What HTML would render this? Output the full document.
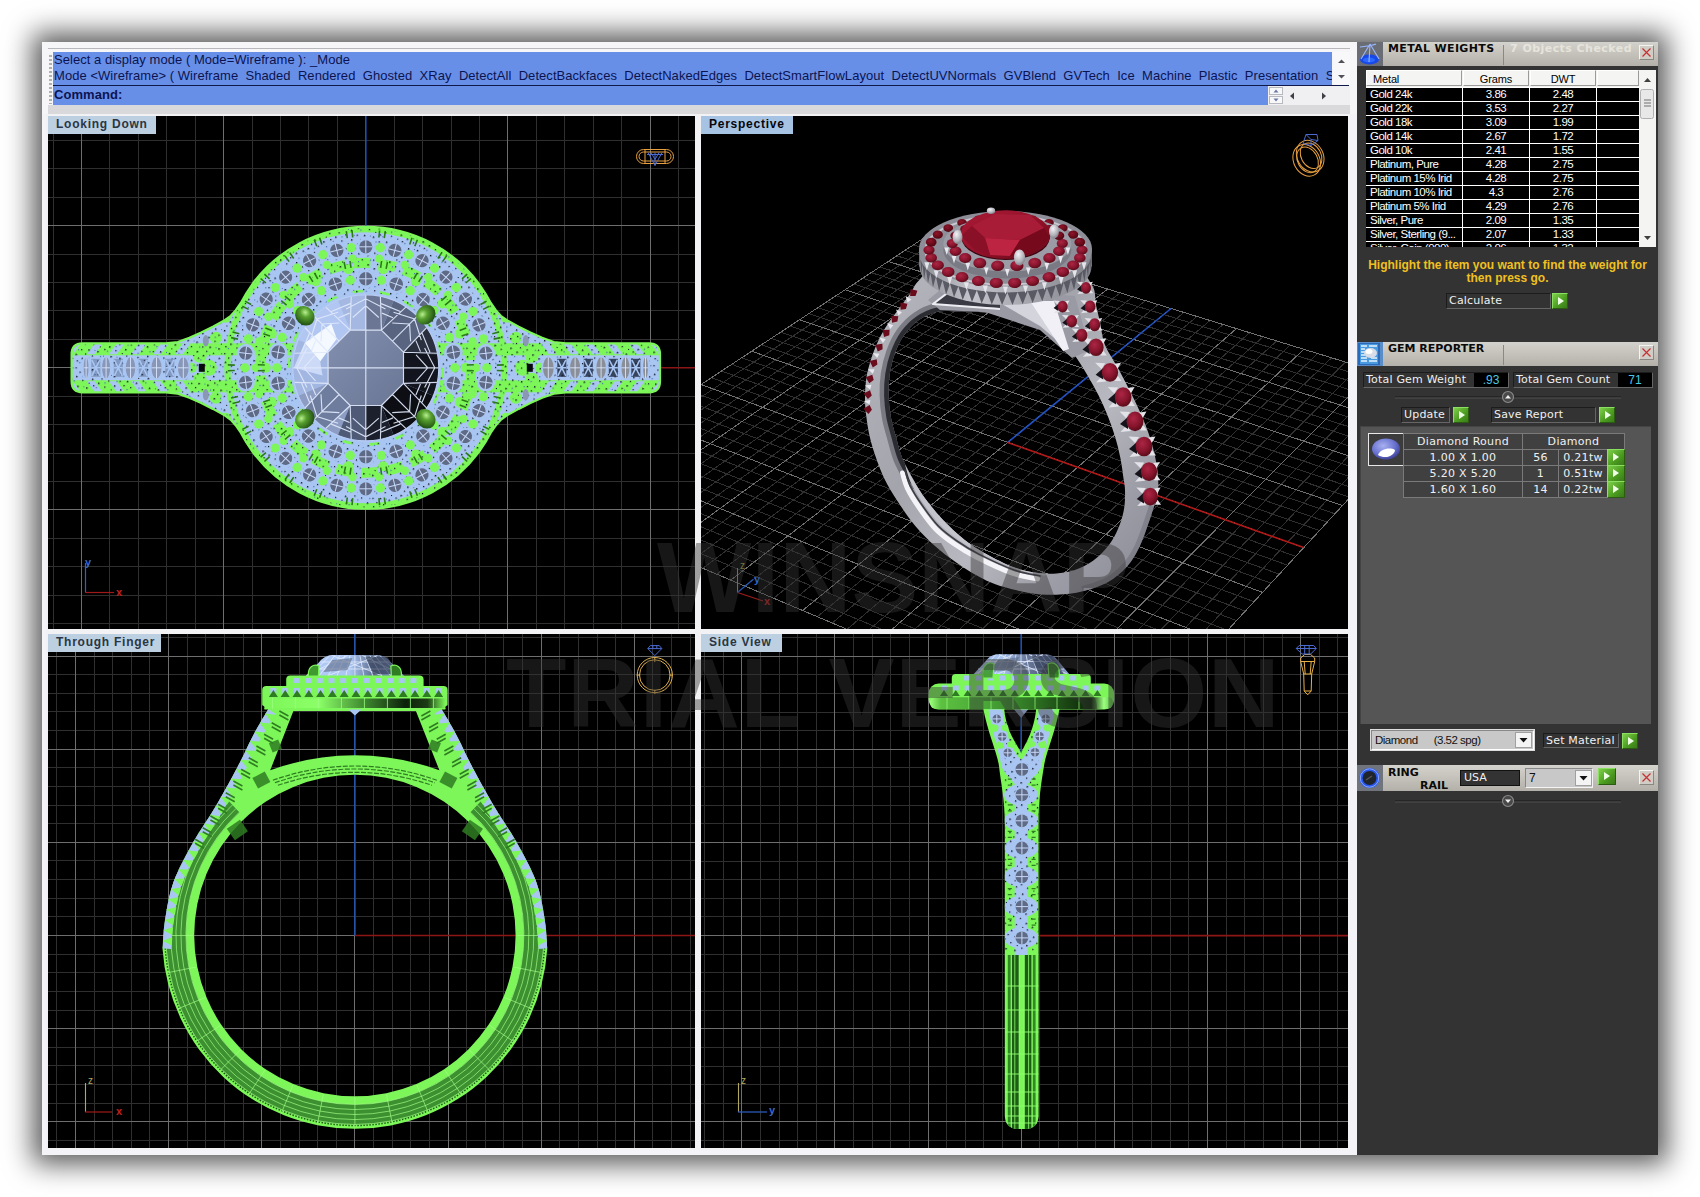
<!DOCTYPE html><html><head><meta charset="utf-8"><title>Rhino - Ring</title><style>

*{box-sizing:border-box;margin:0;padding:0}
html,body{width:1700px;height:1197px;background:#fff;overflow:hidden}
body{position:relative;font-family:"Liberation Sans",sans-serif;font-size:12px;color:#000}
.abs{position:absolute}
#frame{position:absolute;left:42px;top:42px;width:1616px;height:1113px;background:#f4f4f8;box-shadow:0 0 26px 9px rgba(0,0,0,.66)}
#cmdwrap{position:absolute;left:42px;top:42px;width:1315px;height:72px;background:#f6f6f8}
#cmdline{position:absolute;left:48px;top:48px;width:1302px;height:1px;background:#b8b8bc}
#cmdgray{position:absolute;left:48px;top:105px;width:1302px;height:9px;background:#d9d9db}
#cmdblue1{position:absolute;left:53px;top:52px;width:1279px;height:33px;background:#688fe8}
#cmdblue2{position:absolute;left:53px;top:86px;width:1215px;height:19px;background:#688fe8}
#cmddiv{position:absolute;left:53px;top:85px;width:1296px;height:1px;background:#10184a}
.cmdt{position:absolute;left:54px;white-space:nowrap;color:#0c1450;font-size:13px;line-height:16px;letter-spacing:0.05px}
.vp{position:absolute;background:#000;overflow:hidden}
.vpt{position:absolute;left:0;top:0;height:18px;background:#bdd0e2;color:#2a3644;font-weight:bold;font-size:12px;line-height:17px;padding-left:8px;letter-spacing:.75px;white-space:nowrap}
.vp svg{position:absolute;left:0;top:0}
#panel{position:absolute;left:1357px;top:42px;width:301px;height:1113px;background:#333}
.hdr{position:absolute;left:0;width:301px;background:linear-gradient(#d4d2cc,#c2c0b8 55%,#b2b0a8);}
.hdr .ico{position:absolute;left:0;top:0;width:26px;height:100%;background:#6a6d74}
.hdr b{position:absolute;font-family:"DejaVu Sans","Liberation Sans",sans-serif;font-weight:bold;font-size:11px;color:#0a0a0a;white-space:nowrap}
.cls{position:absolute;left:282px;width:15px;height:15px;background:#cfcdc6;border:1px solid #8a8880;border-top-color:#f4f4f0;border-left-color:#f4f4f0}
.cls svg{position:absolute;left:1px;top:1px}
.dv{font-family:"DejaVu Sans","Liberation Sans",sans-serif;font-size:11px;color:#f0f0f0;white-space:nowrap}
.box{position:absolute;background:#333;border:1px solid #1c1c1c;border-right-color:#666;border-bottom-color:#666;}
.box span{position:absolute;left:2px;top:0px;letter-spacing:.2px}
.go{position:absolute;width:16px;height:16px;background:linear-gradient(135deg,#7ed04a,#4a9a20 60%,#3a7a18);border:1px solid #8ae060;border-right-color:#2c5c12;border-bottom-color:#2c5c12}
.go:after{content:"";position:absolute;left:5px;top:3px;border-left:6px solid #f0ffe8;border-top:4px solid transparent;border-bottom:4px solid transparent}
table.mw{position:absolute;left:9px;top:28px;border-collapse:separate;border-spacing:0;font-family:"Liberation Sans",sans-serif;font-size:12px;}


.mwh{background:#f4f4f2;border:1px solid #fff;border-right-color:#9a9a98;border-bottom-color:#9a9a98;font-size:11px;line-height:16px;color:#000;letter-spacing:-.15px}
.mwr{position:absolute;left:0;width:273px;height:13px;}
.mwr i{position:absolute;top:0;height:13px;background:#000;color:#fff;font-style:normal;font-size:11.5px;line-height:13px;text-align:center;white-space:nowrap;overflow:hidden;letter-spacing:-.5px}
.gc{position:absolute;background:#404040;border:1px solid #7a7a7a;text-align:center;letter-spacing:.3px}

</style></head><body>
<div id="frame"></div>
<div id="cmdwrap"></div><div id="cmdline"></div><div id="cmdgray"></div>
<div id="cmdblue1"></div><div id="cmdblue2"></div><div id="cmddiv"></div>
<div class="abs" style="left:49px;top:53px;width:3px;height:51px;background:repeating-linear-gradient(#f4f4f4 0 2px,#b0b0b0 2px 4px)"></div>
<div class="cmdt" style="top:52px">Select a display mode ( Mode=Wireframe ): _Mode</div>
<div class="abs" style="left:53px;top:68px;width:1279px;height:17px;overflow:hidden"><div class="cmdt" style="left:1px;top:0">Mode &lt;Wireframe&gt; ( Wireframe&nbsp; Shaded&nbsp; Rendered&nbsp; Ghosted&nbsp; XRay&nbsp; DetectAll&nbsp; DetectBackfaces&nbsp; DetectNakedEdges&nbsp; DetectSmartFlowLayout&nbsp; DetectUVNormals&nbsp; GVBlend&nbsp; GVTech&nbsp; Ice&nbsp; Machine&nbsp; Plastic&nbsp; Presentation&nbsp; Shaded</div></div>
<div class="cmdt" style="top:87px;font-weight:bold">Command:</div>
<svg class="abs" style="left:1333px;top:52px" width="17" height="54" viewBox="0 0 17 54"><rect x="0" y="0" width="17" height="33" fill="#f8f8fa"/><path d="M5 11L8.5 7.5L12 11Z" fill="#505058"/><path d="M5 23L12 23L8.5 26.5Z" fill="#505058"/></svg>
<svg class="abs" style="left:1268px;top:86px" width="82" height="20" viewBox="0 0 82 20"><rect x="0" y="0" width="82" height="19" fill="#f0f0f2"/><rect x="1.5" y="1.5" width="13" height="7" fill="#f8f8f8" stroke="#b8b8c0"/><rect x="1.5" y="10.5" width="13" height="7" fill="#f8f8f8" stroke="#b8b8c0"/><path d="M5.5 6.5L8 3.5L10.5 6.5Z" fill="#6878a8"/><path d="M5.5 12.5L10.5 12.5L8 15.5Z" fill="#6878a8"/><path d="M26 6.5L26 13.5L22 10Z" fill="#404048"/><path d="M54 6.5L54 13.5L58 10Z" fill="#404048"/></svg>
<div class="abs" style="left:42px;top:114px;width:1315px;height:1041px;background:#f4f4f8"></div>
<div class="abs" style="left:46px;top:114px;width:1304px;height:1036px;background:#f2f2f5"></div>
<div class="vp" style="left:48px;top:116px;width:647px;height:513px"><svg width="647" height="513" viewBox="0 0 647 513"><defs>
<pattern id="stip" width="23" height="19" patternUnits="userSpaceOnUse" patternTransform="rotate(17)"><path d="M1 1h1.4v1.4h-1.4zM8 4h1.2v1.2h-1.2zM15 2h1.4v1.4h-1.4zM20 7h1.2v1.2h-1.2zM4 10h1.4v1.4h-1.4zM11 12h1.4v1.4h-1.4zM18 14h1.2v1.2h-1.2zM7 16h1.3v1.3h-1.3zM13 7h1.2v1.2h-1.2zM2 15h1v1h-1z" fill="#0a1020"/><path d="M5 5h1.2v1.2h-1.2zM17 10h1.2v1.2h-1.2zM10 17h1.2v1.2h-1.2zM21 1h1v1h-1z" fill="#4a70b0"/></pattern>
<linearGradient id="stone" x1="0.12" y1="0.12" x2="0.88" y2="0.88"><stop offset="0" stop-color="#c4d4f6"/><stop offset=".3" stop-color="#9fb0d8"/><stop offset=".55" stop-color="#6c7896"/><stop offset=".75" stop-color="#20242e"/><stop offset="1" stop-color="#0a0c12"/></linearGradient>
<linearGradient id="tbl" x1="0" y1="0" x2="1" y2="1"><stop offset="0" stop-color="#828faf"/><stop offset="1" stop-color="#6a7694"/></linearGradient>
<radialGradient id="prg" cx=".4" cy=".35" r=".7"><stop offset="0" stop-color="#b8f090"/><stop offset=".35" stop-color="#58a030"/><stop offset="1" stop-color="#1c4a10"/></radialGradient>
<clipPath id="bodyclip"><path d="M34.6 227.3L117.8 227.3L129.8 226.0L141.4 221.8L153.2 216.6L164.9 210.7L176.7 204.2L182.8 199.8L187.8 194.2L192.8 187.0L198.0 177.8L205.1 167.1A141 141 0 0 1 430.5 167.1L430.5 167.1L437.6 177.8L442.8 187.0L447.8 194.2L452.8 199.8L458.9 204.2L470.7 210.7L482.4 216.6L494.2 221.8L505.8 226.0L517.8 227.3L601.0 227.3Q612.0 227.3 612.0 238.3L612.0 265.3Q612.0 276.3 601.0 276.3L517.8 276.3L505.8 277.6L494.2 281.8L482.4 287.0L470.7 292.9L458.9 299.4L452.8 303.8L447.8 309.4L442.8 316.6L437.6 325.8L430.5 336.5A141 141 0 0 1 205.1 336.5L205.1 336.5L198.0 325.8L192.8 316.6L187.8 309.4L182.8 303.8L176.7 299.4L164.9 292.9L153.2 287.0L141.4 281.8L129.8 277.6L117.8 276.3L34.6 276.3Q23.6 276.3 23.6 265.3L23.6 238.3Q23.6 227.3 34.6 227.3Z"/></clipPath>
</defs><path d="M-51.5 0V513M-23.5 0V513M5.5 0V513M61.5 0V513M90.5 0V513M118.5 0V513M147.5 0V513M204.5 0V513M232.5 0V513M260.5 0V513M289.5 0V513M346.5 0V513M374.5 0V513M403.5 0V513M431.5 0V513M488.5 0V513M516.5 0V513M545.5 0V513M573.5 0V513M630.5 0V513M658.5 0V513M0 -4.5H647M0 24.5H647M0 52.5H647M0 81.5H647M0 138.5H647M0 166.5H647M0 194.5H647M0 223.5H647M0 280.5H647M0 308.5H647M0 337.5H647M0 365.5H647M0 422.5H647M0 450.5H647M0 479.5H647M0 507.5H647" stroke="#2f2f2f" stroke-width="1" fill="none" shape-rendering="crispEdges"/><path d="M33.5 0V513M175.5 0V513M317.5 0V513M459.5 0V513M602.5 0V513M0 -32.5H647M0 109.5H647M0 251.5H647M0 393.5H647M0 536.5H647" stroke="#6e6e6e" stroke-width="1" fill="none" shape-rendering="crispEdges"/><path d="M317.8 0V110.8" stroke="#1c50b0" stroke-width="1.6"/><path d="M611.8 251.8H647" stroke="#8c1616" stroke-width="1.4"/><path d="M34.6 227.3L117.8 227.3L129.8 226.0L141.4 221.8L153.2 216.6L164.9 210.7L176.7 204.2L182.8 199.8L187.8 194.2L192.8 187.0L198.0 177.8L205.1 167.1A141 141 0 0 1 430.5 167.1L430.5 167.1L437.6 177.8L442.8 187.0L447.8 194.2L452.8 199.8L458.9 204.2L470.7 210.7L482.4 216.6L494.2 221.8L505.8 226.0L517.8 227.3L601.0 227.3Q612.0 227.3 612.0 238.3L612.0 265.3Q612.0 276.3 601.0 276.3L517.8 276.3L505.8 277.6L494.2 281.8L482.4 287.0L470.7 292.9L458.9 299.4L452.8 303.8L447.8 309.4L442.8 316.6L437.6 325.8L430.5 336.5A141 141 0 0 1 205.1 336.5L205.1 336.5L198.0 325.8L192.8 316.6L187.8 309.4L182.8 303.8L176.7 299.4L164.9 292.9L153.2 287.0L141.4 281.8L129.8 277.6L117.8 276.3L34.6 276.3Q23.6 276.3 23.6 265.3L23.6 238.3Q23.6 227.3 34.6 227.3Z" fill="#a9c6f3"/><g clip-path="url(#bodyclip)"><rect x="23.6" y="227.3" width="588.4" height="12" fill="#7cf658"/><rect x="23.6" y="264.3" width="588.4" height="12" fill="#7cf658"/><path d="M142.8 227.3L134.8 227.3L126.8 238.3L134.8 238.3ZM142.8 276.3L134.8 276.3L126.8 265.3L134.8 265.3ZM120.8 227.3L112.8 227.3L104.8 238.3L112.8 238.3ZM120.8 276.3L112.8 276.3L104.8 265.3L112.8 265.3ZM98.8 227.3L90.8 227.3L82.8 238.3L90.8 238.3ZM98.8 276.3L90.8 276.3L82.8 265.3L90.8 265.3ZM76.8 227.3L68.8 227.3L60.8 238.3L68.8 238.3ZM76.8 276.3L68.8 276.3L60.8 265.3L68.8 265.3ZM54.8 227.3L46.8 227.3L38.8 238.3L46.8 238.3ZM54.8 276.3L46.8 276.3L38.8 265.3L46.8 265.3ZM32.8 227.3L24.8 227.3L16.8 238.3L24.8 238.3ZM32.8 276.3L24.8 276.3L16.8 265.3L24.8 265.3ZM492.8 227.3L500.8 227.3L508.8 238.3L500.8 238.3ZM492.8 276.3L500.8 276.3L508.8 265.3L500.8 265.3ZM514.8 227.3L522.8 227.3L530.8 238.3L522.8 238.3ZM514.8 276.3L522.8 276.3L530.8 265.3L522.8 265.3ZM536.8 227.3L544.8 227.3L552.8 238.3L544.8 238.3ZM536.8 276.3L544.8 276.3L552.8 265.3L544.8 265.3ZM558.8 227.3L566.8 227.3L574.8 238.3L566.8 238.3ZM558.8 276.3L566.8 276.3L574.8 265.3L566.8 265.3ZM580.8 227.3L588.8 227.3L596.8 238.3L588.8 238.3ZM580.8 276.3L588.8 276.3L596.8 265.3L588.8 265.3ZM602.8 227.3L610.8 227.3L618.8 238.3L610.8 238.3ZM602.8 276.3L610.8 276.3L618.8 265.3L610.8 265.3Z" fill="#a9c6f3"/><circle cx="317.8" cy="251.8" r="138.5" fill="none" stroke="#7cf658" stroke-width="6"/><circle cx="317.8" cy="251.8" r="105" fill="none" stroke="#7cf658" stroke-width="10" stroke-dasharray="17 8.37"/><circle cx="317.8" cy="251.8" r="76" fill="none" stroke="#7cf658" stroke-width="4" stroke-dasharray="10 16.5"/><circle cx="167.8" cy="221.8" r="6" fill="#7cf658"/><circle cx="167.8" cy="281.8" r="6" fill="#7cf658"/><circle cx="151.8" cy="239.8" r="7" fill="#7cf658"/><circle cx="151.8" cy="263.8" r="7" fill="#7cf658"/><circle cx="160.8" cy="251.8" r="8" fill="#7cf658"/><circle cx="177.8" cy="201.8" r="5" fill="#7cf658"/><circle cx="177.8" cy="301.8" r="5" fill="#7cf658"/><circle cx="143.8" cy="251.8" r="5" fill="#7cf658"/><circle cx="467.8" cy="221.8" r="6" fill="#7cf658"/><circle cx="467.8" cy="281.8" r="6" fill="#7cf658"/><circle cx="483.8" cy="239.8" r="7" fill="#7cf658"/><circle cx="483.8" cy="263.8" r="7" fill="#7cf658"/><circle cx="474.8" cy="251.8" r="8" fill="#7cf658"/><circle cx="457.8" cy="201.8" r="5" fill="#7cf658"/><circle cx="457.8" cy="301.8" r="5" fill="#7cf658"/><circle cx="491.8" cy="251.8" r="5" fill="#7cf658"/><path d="M34.6 227.3L117.8 227.3L129.8 226.0L141.4 221.8L153.2 216.6L164.9 210.7L176.7 204.2L182.8 199.8L187.8 194.2L192.8 187.0L198.0 177.8L205.1 167.1A141 141 0 0 1 430.5 167.1L430.5 167.1L437.6 177.8L442.8 187.0L447.8 194.2L452.8 199.8L458.9 204.2L470.7 210.7L482.4 216.6L494.2 221.8L505.8 226.0L517.8 227.3L601.0 227.3Q612.0 227.3 612.0 238.3L612.0 265.3Q612.0 276.3 601.0 276.3L517.8 276.3L505.8 277.6L494.2 281.8L482.4 287.0L470.7 292.9L458.9 299.4L452.8 303.8L447.8 309.4L442.8 316.6L437.6 325.8L430.5 336.5A141 141 0 0 1 205.1 336.5L205.1 336.5L198.0 325.8L192.8 316.6L187.8 309.4L182.8 303.8L176.7 299.4L164.9 292.9L153.2 287.0L141.4 281.8L129.8 277.6L117.8 276.3L34.6 276.3Q23.6 276.3 23.6 265.3L23.6 238.3Q23.6 227.3 34.6 227.3Z" fill="url(#stip)"/><circle cx="303.2" cy="131.7" r="4.6" fill="#7cf658"/><circle cx="304.5" cy="142.6" r="4.2" fill="#7cf658"/><circle cx="274.9" cy="138.7" r="4.6" fill="#7cf658"/><circle cx="278.8" cy="148.9" r="4.2" fill="#7cf658"/><circle cx="249.1" cy="152.2" r="4.6" fill="#7cf658"/><circle cx="255.3" cy="161.3" r="4.2" fill="#7cf658"/><circle cx="227.2" cy="171.6" r="4.6" fill="#7cf658"/><circle cx="235.5" cy="178.9" r="4.2" fill="#7cf658"/><circle cx="210.7" cy="195.6" r="4.6" fill="#7cf658"/><circle cx="220.4" cy="200.7" r="4.2" fill="#7cf658"/><circle cx="200.3" cy="222.8" r="4.6" fill="#7cf658"/><circle cx="211.0" cy="225.5" r="4.2" fill="#7cf658"/><circle cx="196.8" cy="251.8" r="4.6" fill="#7cf658"/><circle cx="207.8" cy="251.8" r="4.2" fill="#7cf658"/><circle cx="200.3" cy="280.8" r="4.6" fill="#7cf658"/><circle cx="211.0" cy="278.1" r="4.2" fill="#7cf658"/><circle cx="210.7" cy="308.0" r="4.6" fill="#7cf658"/><circle cx="220.4" cy="302.9" r="4.2" fill="#7cf658"/><circle cx="227.2" cy="332.0" r="4.6" fill="#7cf658"/><circle cx="235.5" cy="324.7" r="4.2" fill="#7cf658"/><circle cx="249.1" cy="351.4" r="4.6" fill="#7cf658"/><circle cx="255.3" cy="342.3" r="4.2" fill="#7cf658"/><circle cx="274.9" cy="364.9" r="4.6" fill="#7cf658"/><circle cx="278.8" cy="354.7" r="4.2" fill="#7cf658"/><circle cx="303.2" cy="371.9" r="4.6" fill="#7cf658"/><circle cx="304.5" cy="361.0" r="4.2" fill="#7cf658"/><circle cx="332.4" cy="371.9" r="4.6" fill="#7cf658"/><circle cx="331.1" cy="361.0" r="4.2" fill="#7cf658"/><circle cx="360.7" cy="364.9" r="4.6" fill="#7cf658"/><circle cx="356.8" cy="354.7" r="4.2" fill="#7cf658"/><circle cx="386.5" cy="351.4" r="4.6" fill="#7cf658"/><circle cx="380.3" cy="342.3" r="4.2" fill="#7cf658"/><circle cx="408.4" cy="332.0" r="4.6" fill="#7cf658"/><circle cx="400.1" cy="324.7" r="4.2" fill="#7cf658"/><circle cx="424.9" cy="308.0" r="4.6" fill="#7cf658"/><circle cx="415.2" cy="302.9" r="4.2" fill="#7cf658"/><circle cx="435.3" cy="280.8" r="4.6" fill="#7cf658"/><circle cx="424.6" cy="278.1" r="4.2" fill="#7cf658"/><circle cx="438.8" cy="251.8" r="4.6" fill="#7cf658"/><circle cx="427.8" cy="251.8" r="4.2" fill="#7cf658"/><circle cx="435.3" cy="222.8" r="4.6" fill="#7cf658"/><circle cx="424.6" cy="225.5" r="4.2" fill="#7cf658"/><circle cx="424.9" cy="195.6" r="4.6" fill="#7cf658"/><circle cx="415.2" cy="200.7" r="4.2" fill="#7cf658"/><circle cx="408.4" cy="171.6" r="4.6" fill="#7cf658"/><circle cx="400.1" cy="178.9" r="4.2" fill="#7cf658"/><circle cx="386.5" cy="152.2" r="4.6" fill="#7cf658"/><circle cx="380.3" cy="161.3" r="4.2" fill="#7cf658"/><circle cx="360.7" cy="138.7" r="4.6" fill="#7cf658"/><circle cx="356.8" cy="148.9" r="4.2" fill="#7cf658"/><circle cx="332.4" cy="131.7" r="4.6" fill="#7cf658"/><circle cx="331.1" cy="142.6" r="4.2" fill="#7cf658"/><circle cx="302.3" cy="164.2" r="4.6" fill="#7cf658"/><circle cx="300.4" cy="153.3" r="5" fill="#7cf658"/><circle cx="273.3" cy="174.7" r="4.6" fill="#7cf658"/><circle cx="267.8" cy="165.2" r="5" fill="#7cf658"/><circle cx="249.6" cy="194.6" r="4.6" fill="#7cf658"/><circle cx="241.2" cy="187.5" r="5" fill="#7cf658"/><circle cx="234.2" cy="221.4" r="4.6" fill="#7cf658"/><circle cx="223.8" cy="217.6" r="5" fill="#7cf658"/><circle cx="228.8" cy="251.8" r="4.6" fill="#7cf658"/><circle cx="217.8" cy="251.8" r="5" fill="#7cf658"/><circle cx="234.2" cy="282.2" r="4.6" fill="#7cf658"/><circle cx="223.8" cy="286.0" r="5" fill="#7cf658"/><circle cx="249.6" cy="309.0" r="4.6" fill="#7cf658"/><circle cx="241.2" cy="316.1" r="5" fill="#7cf658"/><circle cx="273.3" cy="328.9" r="4.6" fill="#7cf658"/><circle cx="267.8" cy="338.4" r="5" fill="#7cf658"/><circle cx="302.3" cy="339.4" r="4.6" fill="#7cf658"/><circle cx="300.4" cy="350.3" r="5" fill="#7cf658"/><circle cx="333.3" cy="339.4" r="4.6" fill="#7cf658"/><circle cx="335.2" cy="350.3" r="5" fill="#7cf658"/><circle cx="362.3" cy="328.9" r="4.6" fill="#7cf658"/><circle cx="367.8" cy="338.4" r="5" fill="#7cf658"/><circle cx="386.0" cy="309.0" r="4.6" fill="#7cf658"/><circle cx="394.4" cy="316.1" r="5" fill="#7cf658"/><circle cx="401.4" cy="282.2" r="4.6" fill="#7cf658"/><circle cx="411.8" cy="286.0" r="5" fill="#7cf658"/><circle cx="406.8" cy="251.8" r="4.6" fill="#7cf658"/><circle cx="417.8" cy="251.8" r="5" fill="#7cf658"/><circle cx="401.4" cy="221.4" r="4.6" fill="#7cf658"/><circle cx="411.8" cy="217.6" r="5" fill="#7cf658"/><circle cx="386.0" cy="194.6" r="4.6" fill="#7cf658"/><circle cx="394.4" cy="187.5" r="5" fill="#7cf658"/><circle cx="362.3" cy="174.7" r="4.6" fill="#7cf658"/><circle cx="367.8" cy="165.2" r="5" fill="#7cf658"/><circle cx="333.3" cy="164.2" r="4.6" fill="#7cf658"/><circle cx="335.2" cy="153.3" r="5" fill="#7cf658"/><path d="M304.7 121.5L304.0 114.5M299.3 122.1L298.3 115.2M273.9 128.4L271.6 121.8M268.8 130.3L266.2 123.8M245.7 142.5L241.8 136.6M241.1 145.6L237.0 139.9M221.6 162.9L216.4 158.1M217.9 167.0L212.6 162.5M203.1 188.5L197.0 185.1M200.6 193.4L194.3 190.2M191.3 217.8L184.5 216.0M190.0 223.1L183.1 221.6M186.8 249.1L179.8 248.9M186.8 254.5L179.8 254.7M190.0 280.5L183.1 282.0M191.3 285.8L184.5 287.6M200.6 310.2L194.3 313.4M203.1 315.1L197.0 318.5M217.9 336.6L212.6 341.1M221.6 340.7L216.4 345.5M241.1 358.0L237.0 363.7M245.7 361.1L241.8 367.0M268.8 373.3L266.2 379.8M273.9 375.2L271.6 381.8M299.3 381.5L298.3 388.4M304.7 382.1L304.0 389.1M330.9 382.1L331.6 389.1M336.3 381.5L337.3 388.4M361.7 375.2L364.0 381.8M366.8 373.3L369.4 379.8M389.9 361.1L393.8 367.0M394.5 358.0L398.6 363.7M414.0 340.7L419.2 345.5M417.7 336.6L423.0 341.1M432.5 315.1L438.6 318.5M435.0 310.2L441.3 313.4M444.3 285.8L451.1 287.6M445.6 280.5L452.5 282.0M448.8 254.5L455.8 254.7M448.8 249.1L455.8 248.9M445.6 223.1L452.5 221.6M444.3 217.8L451.1 216.0M435.0 193.4L441.3 190.2M432.5 188.5L438.6 185.1M417.7 167.0L423.0 162.5M414.0 162.9L419.2 158.1M394.5 145.6L398.6 139.9M389.9 142.5L393.8 136.6M366.8 130.3L369.4 123.8M361.7 128.4L364.0 121.8M336.3 122.1L337.3 115.2M330.9 121.5L331.6 114.5M303.0 151.9L302.0 145.0M297.5 152.9L296.1 146.0M269.8 163.0L266.4 156.8M264.9 165.8L261.2 159.8M242.3 184.7L237.0 180.1M238.6 189.1L233.2 184.7M223.9 214.6L217.4 212.0M222.0 219.9L215.3 217.7M216.8 249.0L209.8 248.8M216.8 254.6L209.8 254.8M222.0 283.7L215.3 285.9M223.9 289.0L217.4 291.6M238.6 314.5L233.2 318.9M242.3 318.9L237.0 323.5M264.9 337.8L261.2 343.8M269.8 340.6L266.4 346.8M297.5 350.7L296.1 357.6M303.0 351.7L302.0 358.6M332.6 351.7L333.6 358.6M338.1 350.7L339.5 357.6M365.8 340.6L369.2 346.8M370.7 337.8L374.4 343.8M393.3 318.9L398.6 323.5M397.0 314.5L402.4 318.9M411.7 289.0L418.2 291.6M413.6 283.7L420.3 285.9M418.8 254.6L425.8 254.8M418.8 249.0L425.8 248.8M413.6 219.9L420.3 217.7M411.7 214.6L418.2 212.0M397.0 189.1L402.4 184.7M393.3 184.7L398.6 180.1M370.7 165.8L374.4 159.8M365.8 163.0L369.2 156.8M338.1 152.9L339.5 146.0M332.6 151.9L333.6 145.0" stroke="#2a7a18" stroke-width="1.6" fill="none"/><g transform="translate(317.8 130.8) rotate(0)"><circle r="9.2" fill="#a9c6f3"/><circle r="6.6" fill="#5f6b86"/><path d="M-6.6 0H6.6M0 -6.6V6.6" stroke="#c8d8f8" stroke-width="1"/></g><g transform="translate(288.8 134.3) rotate(-14)"><circle r="9.2" fill="#a9c6f3"/><circle r="6.6" fill="#5f6b86"/><path d="M-6.6 0H6.6M0 -6.6V6.6" stroke="#c8d8f8" stroke-width="1"/></g><g transform="translate(261.6 144.7) rotate(-28)"><circle r="9.2" fill="#a9c6f3"/><circle r="6.6" fill="#5f6b86"/><path d="M-6.6 0H6.6M0 -6.6V6.6" stroke="#c8d8f8" stroke-width="1"/></g><g transform="translate(237.6 161.2) rotate(-42)"><circle r="9.2" fill="#a9c6f3"/><circle r="6.6" fill="#5f6b86"/><path d="M-6.6 0H6.6M0 -6.6V6.6" stroke="#c8d8f8" stroke-width="1"/></g><g transform="translate(218.2 183.1) rotate(-55)"><circle r="9.2" fill="#a9c6f3"/><circle r="6.6" fill="#5f6b86"/><path d="M-6.6 0H6.6M0 -6.6V6.6" stroke="#c8d8f8" stroke-width="1"/></g><g transform="translate(204.7 208.9) rotate(-69)"><circle r="9.2" fill="#a9c6f3"/><circle r="6.6" fill="#5f6b86"/><path d="M-6.6 0H6.6M0 -6.6V6.6" stroke="#c8d8f8" stroke-width="1"/></g><g transform="translate(197.7 237.2) rotate(-83)"><circle r="9.2" fill="#a9c6f3"/><circle r="6.6" fill="#5f6b86"/><path d="M-6.6 0H6.6M0 -6.6V6.6" stroke="#c8d8f8" stroke-width="1"/></g><g transform="translate(197.7 266.4) rotate(-97)"><circle r="9.2" fill="#a9c6f3"/><circle r="6.6" fill="#5f6b86"/><path d="M-6.6 0H6.6M0 -6.6V6.6" stroke="#c8d8f8" stroke-width="1"/></g><g transform="translate(204.7 294.7) rotate(-111)"><circle r="9.2" fill="#a9c6f3"/><circle r="6.6" fill="#5f6b86"/><path d="M-6.6 0H6.6M0 -6.6V6.6" stroke="#c8d8f8" stroke-width="1"/></g><g transform="translate(218.2 320.5) rotate(-125)"><circle r="9.2" fill="#a9c6f3"/><circle r="6.6" fill="#5f6b86"/><path d="M-6.6 0H6.6M0 -6.6V6.6" stroke="#c8d8f8" stroke-width="1"/></g><g transform="translate(237.6 342.4) rotate(-138)"><circle r="9.2" fill="#a9c6f3"/><circle r="6.6" fill="#5f6b86"/><path d="M-6.6 0H6.6M0 -6.6V6.6" stroke="#c8d8f8" stroke-width="1"/></g><g transform="translate(261.6 358.9) rotate(-152)"><circle r="9.2" fill="#a9c6f3"/><circle r="6.6" fill="#5f6b86"/><path d="M-6.6 0H6.6M0 -6.6V6.6" stroke="#c8d8f8" stroke-width="1"/></g><g transform="translate(288.8 369.3) rotate(-166)"><circle r="9.2" fill="#a9c6f3"/><circle r="6.6" fill="#5f6b86"/><path d="M-6.6 0H6.6M0 -6.6V6.6" stroke="#c8d8f8" stroke-width="1"/></g><g transform="translate(317.8 372.8) rotate(-180)"><circle r="9.2" fill="#a9c6f3"/><circle r="6.6" fill="#5f6b86"/><path d="M-6.6 0H6.6M0 -6.6V6.6" stroke="#c8d8f8" stroke-width="1"/></g><g transform="translate(346.8 369.3) rotate(-194)"><circle r="9.2" fill="#a9c6f3"/><circle r="6.6" fill="#5f6b86"/><path d="M-6.6 0H6.6M0 -6.6V6.6" stroke="#c8d8f8" stroke-width="1"/></g><g transform="translate(374.0 358.9) rotate(-208)"><circle r="9.2" fill="#a9c6f3"/><circle r="6.6" fill="#5f6b86"/><path d="M-6.6 0H6.6M0 -6.6V6.6" stroke="#c8d8f8" stroke-width="1"/></g><g transform="translate(398.0 342.4) rotate(-222)"><circle r="9.2" fill="#a9c6f3"/><circle r="6.6" fill="#5f6b86"/><path d="M-6.6 0H6.6M0 -6.6V6.6" stroke="#c8d8f8" stroke-width="1"/></g><g transform="translate(417.4 320.5) rotate(-235)"><circle r="9.2" fill="#a9c6f3"/><circle r="6.6" fill="#5f6b86"/><path d="M-6.6 0H6.6M0 -6.6V6.6" stroke="#c8d8f8" stroke-width="1"/></g><g transform="translate(430.9 294.7) rotate(-249)"><circle r="9.2" fill="#a9c6f3"/><circle r="6.6" fill="#5f6b86"/><path d="M-6.6 0H6.6M0 -6.6V6.6" stroke="#c8d8f8" stroke-width="1"/></g><g transform="translate(437.9 266.4) rotate(-263)"><circle r="9.2" fill="#a9c6f3"/><circle r="6.6" fill="#5f6b86"/><path d="M-6.6 0H6.6M0 -6.6V6.6" stroke="#c8d8f8" stroke-width="1"/></g><g transform="translate(437.9 237.2) rotate(-277)"><circle r="9.2" fill="#a9c6f3"/><circle r="6.6" fill="#5f6b86"/><path d="M-6.6 0H6.6M0 -6.6V6.6" stroke="#c8d8f8" stroke-width="1"/></g><g transform="translate(430.9 208.9) rotate(-291)"><circle r="9.2" fill="#a9c6f3"/><circle r="6.6" fill="#5f6b86"/><path d="M-6.6 0H6.6M0 -6.6V6.6" stroke="#c8d8f8" stroke-width="1"/></g><g transform="translate(417.4 183.1) rotate(-305)"><circle r="9.2" fill="#a9c6f3"/><circle r="6.6" fill="#5f6b86"/><path d="M-6.6 0H6.6M0 -6.6V6.6" stroke="#c8d8f8" stroke-width="1"/></g><g transform="translate(398.0 161.2) rotate(-318)"><circle r="9.2" fill="#a9c6f3"/><circle r="6.6" fill="#5f6b86"/><path d="M-6.6 0H6.6M0 -6.6V6.6" stroke="#c8d8f8" stroke-width="1"/></g><g transform="translate(374.0 144.7) rotate(-332)"><circle r="9.2" fill="#a9c6f3"/><circle r="6.6" fill="#5f6b86"/><path d="M-6.6 0H6.6M0 -6.6V6.6" stroke="#c8d8f8" stroke-width="1"/></g><g transform="translate(346.8 134.3) rotate(-346)"><circle r="9.2" fill="#a9c6f3"/><circle r="6.6" fill="#5f6b86"/><path d="M-6.6 0H6.6M0 -6.6V6.6" stroke="#c8d8f8" stroke-width="1"/></g><g transform="translate(317.8 162.8) rotate(0)"><circle r="9.4" fill="#a9c6f3"/><circle r="6.8" fill="#5f6b86"/><path d="M-6.8 0H6.8M0 -6.8V6.8" stroke="#c8d8f8" stroke-width="1"/></g><g transform="translate(287.4 168.2) rotate(-20)"><circle r="9.4" fill="#a9c6f3"/><circle r="6.8" fill="#5f6b86"/><path d="M-6.8 0H6.8M0 -6.8V6.8" stroke="#c8d8f8" stroke-width="1"/></g><g transform="translate(260.6 183.6) rotate(-40)"><circle r="9.4" fill="#a9c6f3"/><circle r="6.8" fill="#5f6b86"/><path d="M-6.8 0H6.8M0 -6.8V6.8" stroke="#c8d8f8" stroke-width="1"/></g><g transform="translate(240.7 207.3) rotate(-60)"><circle r="9.4" fill="#a9c6f3"/><circle r="6.8" fill="#5f6b86"/><path d="M-6.8 0H6.8M0 -6.8V6.8" stroke="#c8d8f8" stroke-width="1"/></g><g transform="translate(230.2 236.3) rotate(-80)"><circle r="9.4" fill="#a9c6f3"/><circle r="6.8" fill="#5f6b86"/><path d="M-6.8 0H6.8M0 -6.8V6.8" stroke="#c8d8f8" stroke-width="1"/></g><g transform="translate(230.2 267.3) rotate(-100)"><circle r="9.4" fill="#a9c6f3"/><circle r="6.8" fill="#5f6b86"/><path d="M-6.8 0H6.8M0 -6.8V6.8" stroke="#c8d8f8" stroke-width="1"/></g><g transform="translate(240.7 296.3) rotate(-120)"><circle r="9.4" fill="#a9c6f3"/><circle r="6.8" fill="#5f6b86"/><path d="M-6.8 0H6.8M0 -6.8V6.8" stroke="#c8d8f8" stroke-width="1"/></g><g transform="translate(260.6 320.0) rotate(-140)"><circle r="9.4" fill="#a9c6f3"/><circle r="6.8" fill="#5f6b86"/><path d="M-6.8 0H6.8M0 -6.8V6.8" stroke="#c8d8f8" stroke-width="1"/></g><g transform="translate(287.4 335.4) rotate(-160)"><circle r="9.4" fill="#a9c6f3"/><circle r="6.8" fill="#5f6b86"/><path d="M-6.8 0H6.8M0 -6.8V6.8" stroke="#c8d8f8" stroke-width="1"/></g><g transform="translate(317.8 340.8) rotate(-180)"><circle r="9.4" fill="#a9c6f3"/><circle r="6.8" fill="#5f6b86"/><path d="M-6.8 0H6.8M0 -6.8V6.8" stroke="#c8d8f8" stroke-width="1"/></g><g transform="translate(348.2 335.4) rotate(-200)"><circle r="9.4" fill="#a9c6f3"/><circle r="6.8" fill="#5f6b86"/><path d="M-6.8 0H6.8M0 -6.8V6.8" stroke="#c8d8f8" stroke-width="1"/></g><g transform="translate(375.0 320.0) rotate(-220)"><circle r="9.4" fill="#a9c6f3"/><circle r="6.8" fill="#5f6b86"/><path d="M-6.8 0H6.8M0 -6.8V6.8" stroke="#c8d8f8" stroke-width="1"/></g><g transform="translate(394.9 296.3) rotate(-240)"><circle r="9.4" fill="#a9c6f3"/><circle r="6.8" fill="#5f6b86"/><path d="M-6.8 0H6.8M0 -6.8V6.8" stroke="#c8d8f8" stroke-width="1"/></g><g transform="translate(405.4 267.3) rotate(-260)"><circle r="9.4" fill="#a9c6f3"/><circle r="6.8" fill="#5f6b86"/><path d="M-6.8 0H6.8M0 -6.8V6.8" stroke="#c8d8f8" stroke-width="1"/></g><g transform="translate(405.4 236.3) rotate(-280)"><circle r="9.4" fill="#a9c6f3"/><circle r="6.8" fill="#5f6b86"/><path d="M-6.8 0H6.8M0 -6.8V6.8" stroke="#c8d8f8" stroke-width="1"/></g><g transform="translate(394.9 207.3) rotate(-300)"><circle r="9.4" fill="#a9c6f3"/><circle r="6.8" fill="#5f6b86"/><path d="M-6.8 0H6.8M0 -6.8V6.8" stroke="#c8d8f8" stroke-width="1"/></g><g transform="translate(375.0 183.6) rotate(-320)"><circle r="9.4" fill="#a9c6f3"/><circle r="6.8" fill="#5f6b86"/><path d="M-6.8 0H6.8M0 -6.8V6.8" stroke="#c8d8f8" stroke-width="1"/></g><g transform="translate(348.2 168.2) rotate(-340)"><circle r="9.4" fill="#a9c6f3"/><circle r="6.8" fill="#5f6b86"/><path d="M-6.8 0H6.8M0 -6.8V6.8" stroke="#c8d8f8" stroke-width="1"/></g><ellipse cx="157.8" cy="224.8" rx="3.0" ry="5.7" fill="#8a98b4"/><ellipse cx="157.8" cy="278.8" rx="3.0" ry="5.7" fill="#8a98b4"/><ellipse cx="477.8" cy="224.8" rx="3.0" ry="5.7" fill="#8a98b4"/><ellipse cx="477.8" cy="278.8" rx="3.0" ry="5.7" fill="#8a98b4"/><ellipse cx="135.3" cy="251.8" rx="7.5" ry="12.5" fill="#a9c6f3"/><ellipse cx="135.3" cy="251.8" rx="5.3" ry="10.5" fill="#8896b8"/><path d="M135.3 241.3V262.3M130.0 251.8H140.6" stroke="#d8e4fc" stroke-width=".9"/><ellipse cx="108.5" cy="251.8" rx="7.2" ry="12.5" fill="#a9c6f3"/><ellipse cx="108.5" cy="251.8" rx="5.0" ry="10.5" fill="#8896b8"/><path d="M108.5 241.3V262.3M103.5 251.8H113.5" stroke="#d8e4fc" stroke-width=".9"/><ellipse cx="82.5" cy="251.8" rx="6.9" ry="12.5" fill="#a9c6f3"/><ellipse cx="82.5" cy="251.8" rx="4.7" ry="10.5" fill="#8896b8"/><path d="M82.5 241.3V262.3M77.8 251.8H87.2" stroke="#d8e4fc" stroke-width=".9"/><ellipse cx="58.1" cy="251.8" rx="6.2" ry="12.5" fill="#a9c6f3"/><ellipse cx="58.1" cy="251.8" rx="4.0" ry="10.5" fill="#8896b8"/><path d="M58.1 241.3V262.3M54.1 251.8H62.1" stroke="#d8e4fc" stroke-width=".9"/><ellipse cx="38.1" cy="251.8" rx="4.6" ry="12.5" fill="#a9c6f3"/><ellipse cx="38.1" cy="251.8" rx="2.4" ry="10.5" fill="#8896b8"/><path d="M38.1 241.3V262.3M35.7 251.8H40.5" stroke="#d8e4fc" stroke-width=".9"/><rect x="117.3" y="242.8" width="9" height="18" fill="#10182c" opacity="0.25"/><path d="M117.3 251.8H126.3M117.8 243.8L125.8 259.8M125.8 243.8L117.8 259.8" stroke="#a9c6f3" stroke-width="1.5"/><rect x="90.8" y="242.8" width="9" height="18" fill="#10182c" opacity="0.25"/><path d="M90.8 251.8H99.8M91.3 243.8L99.3 259.8M99.3 243.8L91.3 259.8" stroke="#a9c6f3" stroke-width="1.5"/><rect x="65.8" y="242.8" width="9" height="18" fill="#10182c" opacity="0.25"/><path d="M65.8 251.8H74.8M66.3 243.8L74.3 259.8M74.3 243.8L66.3 259.8" stroke="#a9c6f3" stroke-width="1.5"/><rect x="43.3" y="242.8" width="9" height="18" fill="#10182c" opacity="0.25"/><path d="M43.3 251.8H52.3M43.8 243.8L51.8 259.8M51.8 243.8L43.8 259.8" stroke="#a9c6f3" stroke-width="1.5"/><ellipse cx="500.3" cy="251.8" rx="7.5" ry="12.5" fill="#a9c6f3"/><ellipse cx="500.3" cy="251.8" rx="5.3" ry="10.5" fill="#8a8e98"/><path d="M500.3 241.3V262.3M495.0 251.8H505.6" stroke="#d8e4fc" stroke-width=".9"/><ellipse cx="527.1" cy="251.8" rx="7.2" ry="12.5" fill="#a9c6f3"/><ellipse cx="527.1" cy="251.8" rx="5.0" ry="10.5" fill="#8a8e98"/><path d="M527.1 241.3V262.3M522.1 251.8H532.1" stroke="#d8e4fc" stroke-width=".9"/><ellipse cx="553.1" cy="251.8" rx="6.9" ry="12.5" fill="#a9c6f3"/><ellipse cx="553.1" cy="251.8" rx="4.7" ry="10.5" fill="#8a8e98"/><path d="M553.1 241.3V262.3M548.4 251.8H557.8" stroke="#d8e4fc" stroke-width=".9"/><ellipse cx="577.5" cy="251.8" rx="6.2" ry="12.5" fill="#a9c6f3"/><ellipse cx="577.5" cy="251.8" rx="4.0" ry="10.5" fill="#8a8e98"/><path d="M577.5 241.3V262.3M573.5 251.8H581.5" stroke="#d8e4fc" stroke-width=".9"/><ellipse cx="597.5" cy="251.8" rx="4.6" ry="12.5" fill="#a9c6f3"/><ellipse cx="597.5" cy="251.8" rx="2.4" ry="10.5" fill="#8a8e98"/><path d="M597.5 241.3V262.3M595.1 251.8H599.9" stroke="#d8e4fc" stroke-width=".9"/><rect x="509.3" y="242.8" width="9" height="18" fill="#10182c" opacity="0.75"/><path d="M509.3 251.8H518.3M509.8 243.8L517.8 259.8M517.8 243.8L509.8 259.8" stroke="#a9c6f3" stroke-width="1.5"/><rect x="535.8" y="242.8" width="9" height="18" fill="#10182c" opacity="0.75"/><path d="M535.8 251.8H544.8M536.3 243.8L544.3 259.8M544.3 243.8L536.3 259.8" stroke="#a9c6f3" stroke-width="1.5"/><rect x="560.8" y="242.8" width="9" height="18" fill="#10182c" opacity="0.75"/><path d="M560.8 251.8H569.8M561.3 243.8L569.3 259.8M569.3 243.8L561.3 259.8" stroke="#a9c6f3" stroke-width="1.5"/><rect x="583.3" y="242.8" width="9" height="18" fill="#10182c" opacity="0.75"/><path d="M583.3 251.8H592.3M583.8 243.8L591.8 259.8M591.8 243.8L583.8 259.8" stroke="#a9c6f3" stroke-width="1.5"/><rect x="150.8" y="247.8" width="6" height="8" fill="#05080c"/><rect x="478.8" y="247.8" width="6" height="8" fill="#05080c"/></g><path d="M34.6 227.3L117.8 227.3L129.8 226.0L141.4 221.8L153.2 216.6L164.9 210.7L176.7 204.2L182.8 199.8L187.8 194.2L192.8 187.0L198.0 177.8L205.1 167.1A141 141 0 0 1 430.5 167.1L430.5 167.1L437.6 177.8L442.8 187.0L447.8 194.2L452.8 199.8L458.9 204.2L470.7 210.7L482.4 216.6L494.2 221.8L505.8 226.0L517.8 227.3L601.0 227.3Q612.0 227.3 612.0 238.3L612.0 265.3Q612.0 276.3 601.0 276.3L517.8 276.3L505.8 277.6L494.2 281.8L482.4 287.0L470.7 292.9L458.9 299.4L452.8 303.8L447.8 309.4L442.8 316.6L437.6 325.8L430.5 336.5A141 141 0 0 1 205.1 336.5L205.1 336.5L198.0 325.8L192.8 316.6L187.8 309.4L182.8 303.8L176.7 299.4L164.9 292.9L153.2 287.0L141.4 281.8L129.8 277.6L117.8 276.3L34.6 276.3Q23.6 276.3 23.6 265.3L23.6 238.3Q23.6 227.3 34.6 227.3Z" fill="none" stroke="#7cf658" stroke-width="2.2"/><circle cx="317.8" cy="251.8" r="75.5" fill="#a9c6f3"/><path d="M317.8 251.8L345.7 184.4A73 73 0 0 0 317.8 178.8Z" fill="#6a7694"/><path d="M317.8 251.8L317.8 178.8A73 73 0 0 0 289.9 184.4Z" fill="#a4b8e2"/><path d="M317.8 251.8L289.9 184.4A73 73 0 0 0 250.4 223.9Z" fill="#b2c6f2"/><path d="M317.8 251.8L250.4 223.9A73 73 0 0 0 250.4 279.7Z" fill="#a2b6e2"/><path d="M317.8 251.8L250.4 279.7A73 73 0 0 0 289.9 319.2Z" fill="#8c9cc2"/><path d="M317.8 251.8L289.9 319.2A73 73 0 0 0 317.8 324.8Z" fill="#4e5a76"/><path d="M317.8 251.8L317.8 324.8A73 73 0 0 0 345.7 319.2Z" fill="#1c202c"/><path d="M317.8 251.8L345.7 319.2A73 73 0 0 0 385.2 279.7Z" fill="#0c0e14"/><path d="M317.8 251.8L385.2 279.7A73 73 0 0 0 385.2 223.9Z" fill="#12151d"/><path d="M317.8 251.8L385.2 223.9A73 73 0 0 0 345.7 184.4Z" fill="#586480"/><path d="M256.6 227.1L283.3 207.7L288.8 222.8L272.2 245.4Z" fill="#f4f8ff"/><path d="M245.8 251.8L256.6 227.1L272.2 245.4L274.5 259.4Z" fill="#ccdaf8"/><path d="M279.9 267.5L257.3 292.6A73 73 0 0 0 277.0 312.3L302.1 289.7Z" fill="#6e7c9e"/><path d="M355.7 236.1L378.3 211.0A73 73 0 0 1 389.7 239.1Z" fill="#2a303e"/><polygon points="355.5 236.2 333.4 214.1 302.2 214.1 280.1 236.2 280.1 267.4 302.2 289.5 333.4 289.5 355.5 267.4" fill="url(#tbl)"/><path d="M355.5 236.2L389.3 237.2M355.5 236.2L378.7 211.5M355.5 236.2L333.4 214.1M344.5 225.1L369.4 200.2M362.6 225.4L361.6 208.0L344.2 207.0M373.3 224.1L366.6 203.0L345.5 196.3M372.5 235.6L367.9 224.6M382.0 236.4L374.1 217.3M333.4 214.1L358.1 190.9M333.4 214.1L332.4 180.3M333.4 214.1L302.2 214.1M317.8 214.1L317.8 178.8M330.8 201.5L317.8 189.8L304.8 201.5M337.5 193.0L317.8 182.8L298.1 193.0M345.0 201.7L334.0 197.1M352.3 195.5L333.2 187.6M302.2 214.1L303.2 180.3M302.2 214.1L277.5 190.9M302.2 214.1L280.1 236.2M291.1 225.1L266.2 200.2M291.4 207.0L274.0 208.0L273.0 225.4M290.1 196.3L269.0 203.0L262.3 224.1M301.6 197.1L290.6 201.7M302.4 187.6L283.3 195.5M280.1 236.2L256.9 211.5M280.1 236.2L246.3 237.2M280.1 236.2L280.1 267.4M280.1 251.8L244.8 251.8M267.5 238.8L255.8 251.8L267.5 264.8M259.0 232.1L248.8 251.8L259.0 271.5M267.7 224.6L263.1 235.6M261.5 217.3L253.6 236.4M280.1 267.4L246.3 266.4M280.1 267.4L256.9 292.1M280.1 267.4L302.2 289.5M291.1 278.5L266.2 303.4M273.0 278.2L274.0 295.6L291.4 296.6M262.3 279.5L269.0 300.6L290.1 307.3M263.1 268.0L267.7 279.0M253.6 267.2L261.5 286.3M302.2 289.5L277.5 312.7M302.2 289.5L303.2 323.3M302.2 289.5L333.4 289.5M317.8 289.5L317.8 324.8M304.8 302.1L317.8 313.8L330.8 302.1M298.1 310.6L317.8 320.8L337.5 310.6M290.6 301.9L301.6 306.5M283.3 308.1L302.4 316.0M333.4 289.5L332.4 323.3M333.4 289.5L358.1 312.7M333.4 289.5L355.5 267.4M344.5 278.5L369.4 303.4M344.2 296.6L361.6 295.6L362.6 278.2M345.5 307.3L366.6 300.6L373.3 279.5M334.0 306.5L345.0 301.9M333.2 316.0L352.3 308.1M355.5 267.4L378.7 292.1M355.5 267.4L389.3 266.4M355.5 267.4L355.5 236.2M355.5 251.8L390.8 251.8M368.1 264.8L379.8 251.8L368.1 238.8M376.6 271.5L386.8 251.8L376.6 232.1M367.9 279.0L372.5 268.0M374.1 286.3L382.0 267.2M280.1 251.8H355.5M317.8 214.1V289.5" stroke="#dfe8fb" stroke-width="1.15" fill="none" opacity=".92"/><circle cx="317.8" cy="251.8" r="73" fill="none" stroke="#b8ccf4" stroke-width="1.2"/><ellipse cx="256.8" cy="199.8" rx="10.5" ry="9" transform="rotate(45 256.8 199.8)" fill="url(#prg)"/><ellipse cx="377.8" cy="198.8" rx="10.5" ry="9" transform="rotate(-45 377.8 198.8)" fill="url(#prg)"/><ellipse cx="256.8" cy="302.8" rx="10.5" ry="9" transform="rotate(-45 256.8 302.8)" fill="url(#prg)"/><ellipse cx="377.8" cy="302.8" rx="10.5" ry="9" transform="rotate(45 377.8 302.8)" fill="url(#prg)"/><path d="M37.5 447V476.5" stroke="#3060c0" stroke-width="1.2"/><path d="M37 476.5H66" stroke="#a01818" stroke-width="1.2"/><text x="37" y="450" font-family="Liberation Sans,sans-serif" font-weight="bold" font-size="11" fill="#3a6ad0">y</text><text x="68" y="480" font-family="Liberation Sans,sans-serif" font-weight="bold" font-size="11" fill="#c02020">x</text><g transform="translate(607 40.5)" fill="none" stroke="#e8a040" stroke-width="1"><rect x="-18.5" y="-7" width="37" height="14" rx="7"/><rect x="-16" y="-4.5" width="32" height="9" rx="4.5"/><path d="M-10 -7V7M10 -7V7"/><path d="M-7 -4L0 9L7 -4M-8 -2H8M-4 -4L0 3L4 -4M0 -4V9" stroke="#4a6ad0"/></g></svg><div class="vpt" style="width:108px;">Looking Down</div></div>
<div class="vp" style="left:701px;top:116px;width:647px;height:513px"><svg width="647" height="513" viewBox="0 0 647 513"><defs>
<radialGradient id="rg1" cx=".4" cy=".35" r=".75"><stop offset="0" stop-color="#ac2644"/><stop offset=".55" stop-color="#86142c"/><stop offset="1" stop-color="#4c0812"/></radialGradient>
<radialGradient id="rg2" cx=".4" cy=".35" r=".75"><stop offset="0" stop-color="#90142a"/><stop offset="1" stop-color="#48050f"/></radialGradient>
<linearGradient id="band" gradientUnits="userSpaceOnUse" x1="160" y1="200" x2="460" y2="470"><stop offset="0" stop-color="#b4b4bc"/><stop offset=".35" stop-color="#a4a4ac"/><stop offset=".6" stop-color="#b8b8c0"/><stop offset=".8" stop-color="#9c9ca6"/><stop offset="1" stop-color="#8a8a94"/></linearGradient>
<linearGradient id="halow" x1="0" y1="0" x2="1" y2="0"><stop offset="0" stop-color="#8c8c94"/><stop offset=".3" stop-color="#c4c4cc"/><stop offset=".6" stop-color="#a8a8b0"/><stop offset="1" stop-color="#84848c"/></linearGradient>
<linearGradient id="stone2" x1="0" y1="0" x2="1" y2="1"><stop offset="0" stop-color="#a81a36"/><stop offset=".5" stop-color="#96122a"/><stop offset="1" stop-color="#620818"/></linearGradient>
<radialGradient id="prg2" cx=".4" cy=".3" r=".8"><stop offset="0" stop-color="#f4f4f8"/><stop offset=".6" stop-color="#b0b0b8"/><stop offset="1" stop-color="#70707a"/></radialGradient>
</defs><path d="M-156.8 385.3L239.9 121.8M-157.1 371.9L431.0 618.2M-144.1 390.6L251.3 125.3M-145.1 363.9L441.1 607.1M-131.4 396.0L262.8 128.8M-133.1 356.1L451.2 596.3M-118.5 401.4L274.4 132.4M-121.3 348.3L461.0 585.5M-92.5 412.4L297.8 139.6M-98.1 333.1L480.4 564.5M-79.3 418.0L309.6 143.2M-86.7 325.6L489.9 554.2M-66.0 423.6L321.5 146.8M-75.4 318.1L499.3 544.0M-52.6 429.3L333.4 150.5M-64.3 310.8L508.5 534.0M-25.6 440.7L357.6 157.9M-42.3 296.4L526.6 514.3M-11.9 446.5L369.7 161.7M-31.5 289.3L535.5 504.6M1.9 452.3L382.0 165.4M-20.9 282.3L544.3 495.1M15.8 458.2L394.3 169.2M-10.3 275.3L553.0 485.7M44.0 470.1L419.2 176.9M10.4 261.7L570.0 467.2M58.2 476.1L431.8 180.8M20.6 255.0L578.3 458.2M72.6 482.2L444.5 184.6M30.7 248.3L586.6 449.2M87.0 488.3L457.2 188.6M40.7 241.8L594.7 440.4M116.3 500.7L482.9 196.5M60.4 228.8L610.7 423.0M131.2 507.0L495.9 200.5M70.1 222.4L618.5 414.5M146.1 513.3L509.0 204.5M79.7 216.1L626.3 406.1M161.2 519.7L522.2 208.5M89.1 209.9L633.9 397.8M191.8 532.6L548.7 216.7M107.8 197.6L649.0 381.4M207.2 539.1L562.1 220.8M117.0 191.6L656.4 373.4M222.8 545.7L575.7 225.0M126.1 185.6L663.7 365.5M238.5 552.4L589.3 229.1M135.1 179.7L670.9 357.6M270.4 565.8L616.7 237.6M152.8 168.0L685.1 342.2M286.5 572.6L630.6 241.8M161.6 162.3L692.0 334.6M302.8 579.5L644.6 246.1M170.2 156.6L698.9 327.2M319.2 586.4L658.6 250.5M178.8 150.9L705.7 319.7M352.4 600.5L687.1 259.2M195.7 139.8L719.1 305.2M369.3 607.6L701.4 263.6M204.0 134.4L725.7 298.0M386.3 614.8L715.9 268.0M212.2 128.9L732.3 291.0M403.4 622.0L730.4 272.5M220.4 123.6L738.7 283.9" stroke="#303030" stroke-width="1" fill="none" shape-rendering="crispEdges"/><path d="M-169.4 379.9L228.5 118.3M-169.4 379.9L420.7 629.4M-105.5 406.9L286.1 136.0M-109.6 340.6L470.8 574.9M-39.2 435.0L345.5 154.2M-53.2 303.5L517.6 524.1M29.8 464.1L406.8 173.0M0.1 268.5L561.5 476.4M101.6 494.5L470.0 192.5M50.6 235.2L602.7 431.6M176.4 526.1L535.4 212.6M98.5 203.7L641.5 389.5M254.4 559.1L602.9 233.3M144.0 173.8L678.0 349.9M335.7 593.4L672.8 254.8M187.3 145.4L712.5 312.4M420.7 629.4L745.1 277.0M228.5 118.3L745.1 277.0" stroke="#707070" stroke-width="1" fill="none" shape-rendering="crispEdges"/><path d="M306.7 326.4L470.0 192.5" stroke="#2050c0" stroke-width="1.6"/><path d="M306.7 326.4L602.7 431.6" stroke="#b01818" stroke-width="1.6"/><clipPath id="bandclip"><path d="M217.9 164.4C213.0 169.1 212.9 172.3 209.6 177.0C206.3 181.7 201.9 187.4 198.1 192.6C194.3 197.8 190.1 202.9 186.6 208.3C183.1 213.7 180.0 219.1 177.2 225.0C174.4 230.9 171.9 237.5 169.9 243.8C167.9 250.1 166.3 256.0 165.3 262.6C164.3 269.2 164.0 277.2 164.0 283.5C164.0 289.8 164.5 293.9 165.3 300.2C166.1 306.5 167.2 314.1 168.8 321.1C170.4 328.1 172.7 335.0 175.1 342.0C177.6 349.0 179.9 355.7 183.5 362.9C187.1 370.1 191.5 377.4 196.6 385.2C201.7 393.0 207.5 402.0 214.3 409.9C221.1 417.8 229.0 425.7 237.2 432.8C245.4 439.8 254.3 446.3 263.7 452.2C273.1 458.1 282.8 464.0 293.7 468.1C304.6 472.2 318.7 475.1 329.0 476.9C339.3 478.7 346.7 479.0 355.5 478.7C364.3 478.4 373.4 477.3 381.9 475.2C390.4 473.1 399.2 470.4 406.6 466.3C413.9 462.2 420.7 456.4 426.0 450.5C431.3 444.6 434.9 438.2 438.4 431.1C441.9 424.0 444.8 414.9 447.2 408.1C449.6 401.3 451.4 395.5 453.0 390.5C454.6 385.5 456.4 383.9 457.0 378.0C457.6 372.1 457.4 363.0 456.5 355.0C455.6 347.0 453.8 338.5 451.5 330.0C449.2 321.5 446.0 312.7 442.5 304.0C439.0 295.3 434.7 286.5 430.5 278.0C426.3 269.5 421.9 261.2 417.5 253.0C413.1 244.8 407.1 236.8 404.0 229.0C400.9 221.2 400.5 212.7 399.0 206.0C397.5 199.3 396.3 195.2 395.0 189.0C393.7 182.8 395.3 175.7 391.0 169.0C386.7 162.3 383.5 154.0 369.0 149.0C354.5 144.0 325.7 139.0 304.0 139.0C282.3 139.0 253.3 144.8 239.0 149.0C224.7 153.2 222.8 159.7 217.9 164.4ZM236.7 195.8C230.8 197.2 223.5 200.3 217.9 204.1C212.3 207.9 207.3 213.2 203.3 218.8C199.3 224.4 196.3 231.0 193.9 237.6C191.5 244.2 189.8 251.4 188.7 258.4C187.7 265.3 187.4 272.3 187.6 279.3C187.8 286.3 188.5 293.2 189.7 300.2C190.9 307.2 193.1 314.1 195.0 321.1C196.9 328.1 198.3 334.9 201.2 342.0C204.1 349.1 208.6 357.1 212.5 364.0C216.4 370.9 219.3 376.0 224.9 383.4C230.5 390.8 238.3 400.5 246.0 408.1C253.7 415.8 261.4 422.8 270.8 429.3C280.2 435.8 292.8 442.5 302.5 446.9C312.2 451.3 320.2 454.0 329.0 455.8C337.8 457.6 347.3 458.1 355.5 457.5C363.7 456.9 371.6 454.9 378.4 452.2C385.2 449.6 390.8 446.0 396.1 441.6C401.4 437.2 406.4 431.4 410.2 425.8C414.0 420.2 416.8 414.0 419.0 408.1C421.2 402.2 422.6 396.2 423.4 390.5C424.2 384.8 424.1 378.6 424.0 374.0C423.9 369.4 423.4 368.2 422.6 362.9C421.8 357.6 420.8 349.0 419.4 342.0C418.0 335.0 416.3 328.1 414.2 321.1C412.1 314.1 409.7 307.2 406.9 300.2C404.1 293.2 401.0 286.3 397.5 279.3C394.0 272.3 390.2 265.3 386.0 258.4C381.8 251.4 376.8 243.5 372.4 237.6C368.1 231.7 365.5 227.5 359.9 222.9C354.3 218.3 345.8 213.3 339.0 210.0C332.2 206.7 325.2 205.0 319.0 203.0C312.8 201.0 308.9 199.2 301.5 198.0C294.1 196.8 282.3 196.4 274.3 196.0C266.3 195.6 259.7 195.5 253.4 195.5C247.1 195.5 242.6 194.4 236.7 195.8Z" clip-rule="evenodd"/></clipPath><path d="M217.9 164.4C213.0 169.1 212.9 172.3 209.6 177.0C206.3 181.7 201.9 187.4 198.1 192.6C194.3 197.8 190.1 202.9 186.6 208.3C183.1 213.7 180.0 219.1 177.2 225.0C174.4 230.9 171.9 237.5 169.9 243.8C167.9 250.1 166.3 256.0 165.3 262.6C164.3 269.2 164.0 277.2 164.0 283.5C164.0 289.8 164.5 293.9 165.3 300.2C166.1 306.5 167.2 314.1 168.8 321.1C170.4 328.1 172.7 335.0 175.1 342.0C177.6 349.0 179.9 355.7 183.5 362.9C187.1 370.1 191.5 377.4 196.6 385.2C201.7 393.0 207.5 402.0 214.3 409.9C221.1 417.8 229.0 425.7 237.2 432.8C245.4 439.8 254.3 446.3 263.7 452.2C273.1 458.1 282.8 464.0 293.7 468.1C304.6 472.2 318.7 475.1 329.0 476.9C339.3 478.7 346.7 479.0 355.5 478.7C364.3 478.4 373.4 477.3 381.9 475.2C390.4 473.1 399.2 470.4 406.6 466.3C413.9 462.2 420.7 456.4 426.0 450.5C431.3 444.6 434.9 438.2 438.4 431.1C441.9 424.0 444.8 414.9 447.2 408.1C449.6 401.3 451.4 395.5 453.0 390.5C454.6 385.5 456.4 383.9 457.0 378.0C457.6 372.1 457.4 363.0 456.5 355.0C455.6 347.0 453.8 338.5 451.5 330.0C449.2 321.5 446.0 312.7 442.5 304.0C439.0 295.3 434.7 286.5 430.5 278.0C426.3 269.5 421.9 261.2 417.5 253.0C413.1 244.8 407.1 236.8 404.0 229.0C400.9 221.2 400.5 212.7 399.0 206.0C397.5 199.3 396.3 195.2 395.0 189.0C393.7 182.8 395.3 175.7 391.0 169.0C386.7 162.3 383.5 154.0 369.0 149.0C354.5 144.0 325.7 139.0 304.0 139.0C282.3 139.0 253.3 144.8 239.0 149.0C224.7 153.2 222.8 159.7 217.9 164.4ZM236.7 195.8C230.8 197.2 223.5 200.3 217.9 204.1C212.3 207.9 207.3 213.2 203.3 218.8C199.3 224.4 196.3 231.0 193.9 237.6C191.5 244.2 189.8 251.4 188.7 258.4C187.7 265.3 187.4 272.3 187.6 279.3C187.8 286.3 188.5 293.2 189.7 300.2C190.9 307.2 193.1 314.1 195.0 321.1C196.9 328.1 198.3 334.9 201.2 342.0C204.1 349.1 208.6 357.1 212.5 364.0C216.4 370.9 219.3 376.0 224.9 383.4C230.5 390.8 238.3 400.5 246.0 408.1C253.7 415.8 261.4 422.8 270.8 429.3C280.2 435.8 292.8 442.5 302.5 446.9C312.2 451.3 320.2 454.0 329.0 455.8C337.8 457.6 347.3 458.1 355.5 457.5C363.7 456.9 371.6 454.9 378.4 452.2C385.2 449.6 390.8 446.0 396.1 441.6C401.4 437.2 406.4 431.4 410.2 425.8C414.0 420.2 416.8 414.0 419.0 408.1C421.2 402.2 422.6 396.2 423.4 390.5C424.2 384.8 424.1 378.6 424.0 374.0C423.9 369.4 423.4 368.2 422.6 362.9C421.8 357.6 420.8 349.0 419.4 342.0C418.0 335.0 416.3 328.1 414.2 321.1C412.1 314.1 409.7 307.2 406.9 300.2C404.1 293.2 401.0 286.3 397.5 279.3C394.0 272.3 390.2 265.3 386.0 258.4C381.8 251.4 376.8 243.5 372.4 237.6C368.1 231.7 365.5 227.5 359.9 222.9C354.3 218.3 345.8 213.3 339.0 210.0C332.2 206.7 325.2 205.0 319.0 203.0C312.8 201.0 308.9 199.2 301.5 198.0C294.1 196.8 282.3 196.4 274.3 196.0C266.3 195.6 259.7 195.5 253.4 195.5C247.1 195.5 242.6 194.4 236.7 195.8Z" fill="url(#band)" fill-rule="evenodd"/><g clip-path="url(#bandclip)"><path d="M274.0 196.0C270.6 195.9 259.6 195.5 253.4 195.5C247.2 195.5 242.6 194.4 236.7 195.8C230.8 197.2 223.5 200.3 217.9 204.1C212.3 207.9 207.3 213.2 203.3 218.8C199.3 224.4 196.3 231.0 193.9 237.6C191.5 244.2 189.8 251.4 188.7 258.4C187.7 265.3 187.4 272.3 187.6 279.3C187.8 286.3 188.5 293.2 189.7 300.2C190.9 307.2 193.1 314.1 195.0 321.1C196.9 328.1 198.3 334.9 201.2 342.0C204.1 349.1 210.6 360.3 212.5 364.0" fill="none" stroke="#50505a" stroke-width="18" stroke-linecap="round" opacity=".55"/><path d="M274.0 196.0C270.6 195.9 259.6 195.5 253.4 195.5C247.2 195.5 242.6 194.4 236.7 195.8C230.8 197.2 223.5 200.3 217.9 204.1C212.3 207.9 207.3 213.2 203.3 218.8C199.3 224.4 196.3 231.0 193.9 237.6C191.5 244.2 189.8 251.4 188.7 258.4C187.7 265.3 187.4 272.3 187.6 279.3C187.8 286.3 188.5 293.2 189.7 300.2C190.9 307.2 193.1 314.1 195.0 321.1C196.9 328.1 198.3 334.9 201.2 342.0C204.1 349.1 210.6 360.3 212.5 364.0" fill="none" stroke="#18181e" stroke-width="9" stroke-linecap="round" opacity=".8"/><path d="M204.0 354.0C204.8 356.6 206.2 363.5 209.0 369.3C211.8 375.1 216.3 382.2 221.0 389.0C225.7 395.8 231.4 403.9 237.2 409.9C243.0 415.9 249.2 420.3 256.0 425.0C262.8 429.7 268.3 433.3 277.8 438.1C287.3 442.9 302.9 450.4 313.1 454.0C323.3 457.6 334.7 459.0 339.0 460.0" fill="none" stroke="#f4f4f8" stroke-width="5" stroke-linecap="round" transform="translate(-2.5 3)"/><path d="M204.0 354.0C204.8 356.6 206.2 363.5 209.0 369.3C211.8 375.1 216.3 382.2 221.0 389.0C225.7 395.8 231.4 403.9 237.2 409.9C243.0 415.9 249.2 420.3 256.0 425.0C262.8 429.7 268.3 433.3 277.8 438.1C287.3 442.9 302.9 450.4 313.1 454.0C323.3 457.6 334.7 459.0 339.0 460.0" fill="none" stroke="#c4c4cc" stroke-width="7" stroke-linecap="round" transform="translate(4 -4)"/><path d="M204.0 354.0C204.8 356.6 206.2 363.5 209.0 369.3C211.8 375.1 216.3 382.2 221.0 389.0C225.7 395.8 231.4 403.9 237.2 409.9C243.0 415.9 249.2 420.3 256.0 425.0C262.8 429.7 268.3 433.3 277.8 438.1C287.3 442.9 302.9 450.4 313.1 454.0C323.3 457.6 334.7 459.0 339.0 460.0" fill="none" stroke="#3c3c44" stroke-width="1.6" stroke-linecap="round"/><path d="M381.9 475.2C386.0 473.7 399.2 470.4 406.6 466.3C413.9 462.2 420.7 456.4 426.0 450.5C431.3 444.6 434.9 438.2 438.4 431.1C441.9 424.0 444.8 414.9 447.2 408.1C449.6 401.3 452.0 393.4 453.0 390.5" fill="none" stroke="#6c6c76" stroke-width="10" opacity=".5"/></g><polygon points="227.0,184.0 244.0,170.0 374.0,180.0 389.0,234.0 371.0,242.0 339.0,214.0 284.0,196.0 239.0,194.0" fill="#9a9aa4"/><polygon points="232.0,188.0 247.0,176.5 299.0,181.0 299.0,192.0" fill="#3a3a44"/><path d="M247 176.5L232 188L299 193" fill="none" stroke="#ececf2" stroke-width="2.2" stroke-linejoin="round"/><polygon points="299.0,187.0 349.0,186.0 366.0,233.0 339.0,210.0" fill="#d4d4dc"/><polygon points="329.0,185.0 353.0,185.0 368.0,233.0 362.0,235.0" fill="#f0f0f6"/><ellipse cx="304.5" cy="150.5" rx="86.0" ry="38.5" fill="url(#halow)"/><rect x="218.2" y="133.0" width="172.6" height="17.5" fill="url(#halow)"/><path d="M390.0 142.0L389.3 156.8L388.3 146.6ZM388.3 146.6L387.0 161.3L385.4 151.0ZM385.4 151.0L383.5 165.7L381.3 155.3ZM381.3 155.3L378.9 169.8L376.1 159.3ZM376.1 159.3L373.1 173.7L369.9 163.0ZM369.9 163.0L366.4 177.2L362.7 166.3ZM362.7 166.3L358.8 180.4L354.7 169.3ZM354.7 169.3L350.4 183.1L345.9 171.7ZM345.9 171.7L341.3 185.3L336.6 173.7ZM336.6 173.7L331.7 187.0L326.8 175.2ZM326.8 175.2L321.7 188.2L316.6 176.1ZM316.6 176.1L311.5 188.9L306.3 176.5ZM306.3 176.5L301.1 189.0L296.0 176.3ZM296.0 176.3L290.8 188.5L285.7 175.6ZM285.7 175.6L280.7 187.5L275.8 174.3ZM275.8 174.3L271.0 186.0L266.3 172.5ZM266.3 172.5L261.7 183.9L257.3 170.2ZM257.3 170.2L253.0 181.3L249.0 167.4ZM249.0 167.4L245.1 178.4L241.5 164.2ZM241.5 164.2L238.1 175.0L234.9 160.6ZM234.9 160.6L232.0 171.2L229.4 156.7ZM229.4 156.7L227.0 167.2L224.9 152.5ZM224.9 152.5L223.1 162.9L221.5 148.2ZM221.5 148.2L220.3 158.4L219.4 143.6Z" fill="#5a5a64"/><ellipse cx="304.5" cy="133.0" rx="86.5" ry="38.0" fill="#8e8e98"/><ellipse cx="304.5" cy="134.2" rx="80.0" ry="34.5" fill="none" stroke="#c8c8d0" stroke-width="2"/><path d="M380.5 146.3L383.0 154.3L385.5 146.3ZM371.1 154.3L373.6 162.3L376.1 154.3ZM357.6 161.1L360.1 169.1L362.6 161.1ZM340.9 166.2L343.4 174.2L345.9 166.2ZM322.0 169.4L324.5 177.4L327.0 169.4ZM301.9 170.5L304.4 178.5L306.9 170.5ZM281.8 169.4L284.3 177.4L286.8 169.4ZM262.9 166.2L265.4 174.2L267.9 166.2ZM246.2 161.0L248.7 169.0L251.2 161.0ZM232.8 154.3L235.3 162.3L237.8 154.3ZM223.4 146.3L225.9 154.3L228.4 146.3Z" fill="#e4e4ea"/><ellipse cx="381.0" cy="134.0" rx="5.6" ry="4.5" fill="url(#rg1)"/><ellipse cx="378.8" cy="141.9" rx="5.8" ry="4.7" fill="url(#rg1)"/><ellipse cx="372.2" cy="149.3" rx="6.1" ry="4.9" fill="url(#rg1)"/><ellipse cx="361.8" cy="155.9" rx="6.3" ry="5.0" fill="url(#rg1)"/><ellipse cx="348.0" cy="161.2" rx="6.4" ry="5.1" fill="url(#rg1)"/><ellipse cx="331.6" cy="164.9" rx="6.5" ry="5.2" fill="url(#rg1)"/><ellipse cx="313.7" cy="166.8" rx="6.6" ry="5.3" fill="url(#rg1)"/><ellipse cx="295.3" cy="166.8" rx="6.6" ry="5.3" fill="url(#rg1)"/><ellipse cx="277.4" cy="164.9" rx="6.5" ry="5.2" fill="url(#rg1)"/><ellipse cx="261.0" cy="161.2" rx="6.4" ry="5.1" fill="url(#rg1)"/><ellipse cx="247.2" cy="155.9" rx="6.3" ry="5.0" fill="url(#rg1)"/><ellipse cx="236.8" cy="149.3" rx="6.1" ry="4.9" fill="url(#rg1)"/><ellipse cx="230.2" cy="141.9" rx="5.8" ry="4.7" fill="url(#rg1)"/><ellipse cx="228.0" cy="134.0" rx="5.6" ry="4.5" fill="url(#rg1)"/><ellipse cx="230.2" cy="126.1" rx="5.4" ry="4.3" fill="url(#rg2)"/><ellipse cx="236.8" cy="118.7" rx="5.1" ry="4.1" fill="url(#rg2)"/><ellipse cx="247.2" cy="112.1" rx="4.9" ry="3.9" fill="url(#rg2)"/><ellipse cx="261.0" cy="106.8" rx="4.8" ry="3.8" fill="url(#rg2)"/><ellipse cx="277.4" cy="103.1" rx="4.7" ry="3.7" fill="url(#rg2)"/><ellipse cx="295.3" cy="101.2" rx="4.6" ry="3.7" fill="url(#rg2)"/><ellipse cx="313.7" cy="101.2" rx="4.6" ry="3.7" fill="url(#rg2)"/><ellipse cx="331.6" cy="103.1" rx="4.7" ry="3.7" fill="url(#rg2)"/><ellipse cx="348.0" cy="106.8" rx="4.8" ry="3.8" fill="url(#rg2)"/><ellipse cx="361.8" cy="112.1" rx="4.9" ry="3.9" fill="url(#rg2)"/><ellipse cx="372.2" cy="118.7" rx="5.1" ry="4.1" fill="url(#rg2)"/><ellipse cx="378.8" cy="126.1" rx="5.4" ry="4.3" fill="url(#rg2)"/><ellipse cx="306.3" cy="134.0" rx="64.0" ry="28.5" fill="#7a7a84"/><ellipse cx="306.3" cy="128.0" rx="64.0" ry="27.5" fill="#9c9ca6"/><path d="M364.6 131.5L366.9 139.0L369.2 131.5ZM357.3 140.0L359.6 147.5L361.9 140.0ZM343.5 146.9L345.8 154.4L348.1 146.9ZM325.0 151.4L327.3 158.9L329.6 151.4ZM304.0 153.0L306.3 160.5L308.6 153.0ZM283.0 151.4L285.3 158.9L287.6 151.4ZM264.5 146.9L266.8 154.4L269.1 146.9ZM250.7 140.0L253.0 147.5L255.3 140.0ZM243.4 131.5L245.7 139.0L248.0 131.5Z" fill="#e8e8ee"/><ellipse cx="361.3" cy="127.5" rx="5.6" ry="4.5" fill="url(#rg1)"/><ellipse cx="358.0" cy="135.2" rx="5.9" ry="4.8" fill="url(#rg1)"/><ellipse cx="348.4" cy="142.0" rx="6.2" ry="5.0" fill="url(#rg1)"/><ellipse cx="333.8" cy="147.0" rx="6.5" ry="5.2" fill="url(#rg1)"/><ellipse cx="315.9" cy="149.7" rx="6.6" ry="5.3" fill="url(#rg1)"/><ellipse cx="296.7" cy="149.7" rx="6.6" ry="5.3" fill="url(#rg1)"/><ellipse cx="278.8" cy="147.0" rx="6.5" ry="5.2" fill="url(#rg1)"/><ellipse cx="264.2" cy="142.0" rx="6.2" ry="5.0" fill="url(#rg1)"/><ellipse cx="254.6" cy="135.2" rx="5.9" ry="4.8" fill="url(#rg1)"/><ellipse cx="251.3" cy="127.5" rx="5.6" ry="4.5" fill="url(#rg1)"/><ellipse cx="254.6" cy="119.8" rx="5.3" ry="4.2" fill="url(#rg2)"/><ellipse cx="264.2" cy="113.0" rx="5.0" ry="4.0" fill="url(#rg2)"/><ellipse cx="278.8" cy="108.0" rx="4.7" ry="3.8" fill="url(#rg2)"/><ellipse cx="296.7" cy="105.3" rx="4.6" ry="3.7" fill="url(#rg2)"/><ellipse cx="315.9" cy="105.3" rx="4.6" ry="3.7" fill="url(#rg2)"/><ellipse cx="333.8" cy="108.0" rx="4.7" ry="3.8" fill="url(#rg2)"/><ellipse cx="348.4" cy="113.0" rx="5.0" ry="4.0" fill="url(#rg2)"/><ellipse cx="358.0" cy="119.8" rx="5.3" ry="4.2" fill="url(#rg2)"/><ellipse cx="304.6" cy="122.0" rx="44.0" ry="22.0" fill="#3a0610"/><ellipse cx="304.6" cy="118.6" rx="45.0" ry="24.3" fill="url(#stone2)"/><polygon points="271.0,110.0 294.0,98.0 329.0,99.0 343.0,112.0 319.0,124.0 284.0,122.0" fill="#a81c38"/><polygon points="284.0,122.0 319.0,124.0 309.0,140.0 289.0,139.0" fill="#bc2442"/><polygon points="319.0,124.0 343.0,112.0 349.0,122.0 329.0,138.0 309.0,140.0" fill="#760a1c"/><polygon points="260.0,120.0 271.0,110.0 284.0,122.0 289.0,139.0 274.0,134.0" fill="#8a1028"/><ellipse cx="290.0" cy="94.8" rx="4.2" ry="3.2" fill="url(#prg2)"/><ellipse cx="256.5" cy="121.0" rx="5.0" ry="7.0" fill="url(#prg2)"/><ellipse cx="353.0" cy="115.5" rx="5.0" ry="7.0" fill="url(#prg2)"/><ellipse cx="318.5" cy="141.5" rx="5.6" ry="8.0" fill="url(#prg2)"/><path d="M375.7 165.8L382.0 166.1L379.6 169.7ZM376.3 178.1L382.6 177.5L379.9 174.2ZM391.9 165.8L387.7 166.4L389.5 170.0ZM392.2 177.2L388.0 177.2L389.8 173.9ZM379.3 184.3L385.9 184.6L383.4 188.4ZM380.0 197.2L386.6 196.6L383.7 193.1ZM396.3 184.3L391.9 184.9L393.8 188.7ZM396.7 196.3L392.2 196.3L394.1 192.8ZM383.5 202.1L390.4 202.4L387.8 206.4ZM384.1 215.6L391.1 215.0L388.1 211.3ZM401.3 202.1L396.7 202.8L398.7 206.7ZM401.6 214.6L397.0 214.6L399.0 211.0ZM381.1 222.3L390.5 222.8L386.9 228.2ZM381.9 240.8L391.4 239.9L387.4 234.9ZM405.4 222.3L399.1 223.2L401.8 228.6ZM405.8 239.4L399.5 239.4L402.2 234.5ZM394.1 246.8L404.2 247.3L400.4 253.0ZM395.1 266.5L405.2 265.5L400.8 260.2ZM420.0 246.8L413.3 247.8L416.2 253.5ZM420.5 265.0L413.8 265.0L416.7 259.8ZM406.6 271.0L417.1 271.5L413.1 277.5ZM407.6 291.5L418.1 290.5L413.6 285.0ZM433.6 271.0L426.6 272.0L429.6 278.0ZM434.1 290.0L427.1 290.0L430.1 284.5ZM418.5 295.4L429.0 295.9L425.0 301.9ZM419.5 315.9L430.0 314.9L425.5 309.4ZM445.5 295.4L438.5 296.4L441.5 302.4ZM446.0 314.4L439.0 314.4L442.0 308.9ZM427.5 320.5L438.0 321.0L434.0 327.0ZM428.5 341.0L439.0 340.0L434.5 334.5ZM454.5 320.5L447.5 321.5L450.5 327.5ZM455.0 339.5L448.0 339.5L451.0 334.0ZM433.1 346.0L443.2 346.5L439.4 352.2ZM434.1 365.7L444.2 364.7L439.8 359.4ZM459.0 346.0L452.3 347.0L455.2 352.7ZM459.5 364.2L452.8 364.2L455.7 359.0ZM435.3 371.6L444.8 372.1L441.2 377.5ZM436.2 390.1L445.7 389.2L441.6 384.2ZM459.6 371.6L453.3 372.5L456.0 377.9ZM460.1 388.7L453.8 388.7L456.5 383.8ZM352.3 184.6L358.6 184.9L356.2 188.5ZM352.9 196.9L359.2 196.3L356.5 193.0ZM368.5 184.6L364.3 185.2L366.1 188.8ZM368.8 196.0L364.6 196.0L366.4 192.7ZM360.9 198.9L367.6 199.2L365.0 203.0ZM361.6 211.8L368.2 211.2L365.3 207.7ZM377.9 198.9L373.5 199.5L375.4 203.3ZM378.3 210.9L373.9 210.9L375.7 207.4ZM370.6 212.6L377.5 212.9L374.9 216.9ZM371.2 226.1L378.2 225.5L375.2 221.8ZM388.4 212.6L383.8 213.3L385.7 217.2ZM388.7 225.1L384.1 225.1L386.1 221.5Z" fill="#e2e2e8"/><path d="M376.0 173.3L380.8 169.1L380.8 176.3ZM379.6 192.2L384.7 187.8L384.7 195.3ZM383.8 210.3L389.1 205.7L389.1 213.6ZM381.5 233.6L388.7 227.2L388.7 238.1ZM394.6 258.8L402.3 252.1L402.3 263.6ZM407.1 283.5L415.1 276.5L415.1 288.5ZM419.0 307.9L427.0 300.9L427.0 312.9ZM428.0 333.0L436.0 326.0L436.0 338.0ZM433.6 358.0L441.3 351.3L441.3 362.8ZM435.8 382.9L443.0 376.6L443.0 387.4ZM352.6 192.1L357.4 187.9L357.4 195.1ZM361.3 206.8L366.3 202.4L366.3 209.9ZM370.9 220.8L376.2 216.2L376.2 224.1Z" fill="#15121a"/><ellipse cx="385.0" cy="171.8" rx="5.0" ry="5.9" fill="url(#rg1)"/><ellipse cx="389.1" cy="190.6" rx="5.3" ry="6.2" fill="url(#rg1)"/><ellipse cx="393.7" cy="208.7" rx="5.5" ry="6.5" fill="url(#rg1)"/><ellipse cx="395.0" cy="231.3" rx="7.6" ry="8.8" fill="url(#rg1)"/><ellipse cx="409.0" cy="256.4" rx="8.1" ry="9.4" fill="url(#rg1)"/><ellipse cx="422.1" cy="281.0" rx="8.4" ry="9.8" fill="url(#rg1)"/><ellipse cx="434.0" cy="305.4" rx="8.4" ry="9.8" fill="url(#rg1)"/><ellipse cx="443.0" cy="330.5" rx="8.4" ry="9.8" fill="url(#rg1)"/><ellipse cx="448.0" cy="355.6" rx="8.1" ry="9.4" fill="url(#rg1)"/><ellipse cx="449.3" cy="380.6" rx="7.6" ry="8.8" fill="url(#rg1)"/><ellipse cx="361.6" cy="190.6" rx="5.0" ry="5.9" fill="url(#rg1)"/><ellipse cx="370.7" cy="205.2" rx="5.3" ry="6.2" fill="url(#rg1)"/><ellipse cx="380.8" cy="219.2" rx="5.5" ry="6.5" fill="url(#rg1)"/><path d="M210.4 183.4L204.6 180.0L206.6 186.4ZM201.0 196.2L195.0 193.4L197.5 199.5ZM192.3 209.3L186.1 207.1L189.2 212.9ZM184.7 223.1L178.2 221.5L181.9 227.0ZM178.4 237.8L171.8 236.9L176.1 242.0ZM173.6 253.3L167.0 253.2L171.8 257.8ZM170.5 268.8L163.9 269.4L169.2 273.4ZM169.4 283.9L162.8 285.1L168.5 288.6Z" fill="#e8e8ee"/><path d="M216.4 174.8L209.5 173.0L209.1 180.1L214.5 179.9ZM206.4 187.8L199.4 186.6L199.6 193.7L204.9 193.0ZM197.3 200.3L190.2 199.8L191.1 206.8L196.4 205.6ZM188.6 213.8L181.5 214.0L183.1 220.9L188.3 219.2ZM181.4 227.8L174.4 228.7L176.7 235.4L181.6 233.2ZM175.7 243.2L168.7 244.9L171.8 251.4L176.4 248.6ZM171.3 258.8L164.6 261.2L168.3 267.2L172.7 264.0ZM169.0 274.3L162.6 277.4L166.9 283.1L170.8 279.4ZM168.6 288.9L162.5 292.7L167.4 297.9L170.9 293.8Z" fill="#6a0c1c"/><path d="M36.5 452V476.5" stroke="#a8a048" stroke-width="1"/><path d="M36.5 476.5L62 485" stroke="#a01c1c" stroke-width="1.2"/><path d="M36.5 476.5L52 463.5" stroke="#2458b8" stroke-width="1.2"/><text x="39" y="453" font-family="Liberation Sans,sans-serif" font-size="10" fill="#a8a048">z</text><text x="53" y="467" font-family="Liberation Sans,sans-serif" font-weight="bold" font-size="11" fill="#2c68c8">y</text><text x="63" y="489" font-family="Liberation Sans,sans-serif" font-weight="bold" font-size="11" fill="#b02020">x</text><g transform="translate(607 42.5)" fill="none" stroke="#e8a040" stroke-width="1"><ellipse cx="-2" cy="1" rx="13" ry="16.5" transform="rotate(-28)"/><ellipse cx="-1" cy="1" rx="10" ry="13.5" transform="rotate(-28)"/><ellipse cx="3" cy="-1" rx="13" ry="16.5" transform="rotate(-28)"/><ellipse cx="4" cy="-1" rx="10" ry="13.5" transform="rotate(-28)"/><path d="M-5 -15L-2 -24H9L10 -18L3 -13ZM-2 -24L3 -19L10 -18M3 -19V-13" stroke="#4a6ad0"/></g></svg><div class="vpt" style="width:92px;background:#a6c3e3;color:#05050c;">Perspective</div></div>
<div class="vp" style="left:48px;top:634px;width:647px;height:514px"><svg width="647" height="514" viewBox="0 0 647 514"><defs>
<linearGradient id="gal" x1="0" y1="0" x2="1" y2="0"><stop offset="0" stop-color="#7cf658"/><stop offset=".3" stop-color="#8cff68"/><stop offset=".55" stop-color="#3f8a30"/><stop offset=".78" stop-color="#0c200a"/><stop offset=".9" stop-color="#1c3c14"/><stop offset="1" stop-color="#7cf658"/></linearGradient>
<linearGradient id="dome3" x1="0" y1="0" x2="1" y2="0"><stop offset="0" stop-color="#b4ccf6"/><stop offset=".45" stop-color="#a9c6f3"/><stop offset=".7" stop-color="#5a6a8c"/><stop offset="1" stop-color="#8aa0cc"/></linearGradient>
</defs><path d="M-28.5 0V514M-9.5 0V514M8.5 0V514M46.5 0V514M64.5 0V514M83.5 0V514M101.5 0V514M139.5 0V514M157.5 0V514M176.5 0V514M195.5 0V514M232.5 0V514M251.5 0V514M269.5 0V514M288.5 0V514M325.5 0V514M344.5 0V514M362.5 0V514M381.5 0V514M418.5 0V514M437.5 0V514M455.5 0V514M474.5 0V514M511.5 0V514M530.5 0V514M549.5 0V514M567.5 0V514M604.5 0V514M623.5 0V514M642.5 0V514M660.5 0V514M0 -33.5H647M0 -15.5H647M0 3.5H647M0 40.5H647M0 59.5H647M0 77.5H647M0 96.5H647M0 133.5H647M0 152.5H647M0 171.5H647M0 189.5H647M0 226.5H647M0 245.5H647M0 264.5H647M0 282.5H647M0 320.5H647M0 338.5H647M0 357.5H647M0 376.5H647M0 413.5H647M0 431.5H647M0 450.5H647M0 469.5H647M0 506.5H647M0 525.5H647" stroke="#2f2f2f" stroke-width="1" fill="none" shape-rendering="crispEdges"/><path d="M27.5 0V514M120.5 0V514M213.5 0V514M306.5 0V514M400.5 0V514M493.5 0V514M586.5 0V514M0 22.5H647M0 115.5H647M0 208.5H647M0 301.5H647M0 394.5H647M0 487.5H647" stroke="#6e6e6e" stroke-width="1" fill="none" shape-rendering="crispEdges"/><path d="M306.9 0V301.5" stroke="#1c50b0" stroke-width="1.6"/><path d="M306.9 301.5H647" stroke="#8c1616" stroke-width="1.6"/><g transform="translate(-0.6 0)"><path d="M258.2 42L271 29Q277 21.5 284 21.1L331 21.1Q338 21.5 344 29L356.8 42Z" fill="url(#dome3)"/><path d="M262.5 42L282.5 21.5M271.5 42L287.5 21.5M280.5 42L292.5 21.5M289.5 42L297.5 21.5M298.5 42L302.5 21.5M307.5 42L307.5 21.5M316.5 42L312.5 21.5M325.5 42L317.5 21.5M334.5 42L322.5 21.5M343.5 42L327.5 21.5M352.5 42L332.5 21.5M266 35H349M273 28H342M262 40L300 21.5M353 40L315 21.5M280 42L330 21.5M335 42L285 21.5" stroke="#e4ecfc" stroke-width=".8" fill="none"/><path d="M318 23L340 23L350 40L326 40Z" fill="#39445e" opacity=".7"/><path d="M285 26L305 24L300 36L276 38Z" fill="#5a6884" opacity=".6"/><path d="M261 42.5C260 33 266 29.5 271.5 32L271 42.5Z" fill="#3f9a30" stroke="#7cf658" stroke-width="1.2"/><path d="M354 42.5C355 33 349 29.5 343.5 32L344 42.5Z" fill="#2f7d22" stroke="#7cf658" stroke-width="1.2"/><clipPath id="body3"><path d="M220.9 75.2L220.2 76.3L219.4 77.7L218.4 79.3L217.4 81.1L216.2 83.0L214.9 85.1L213.6 87.3L212.3 89.7L210.9 92.0L209.5 94.5L208.1 96.9L206.8 99.4L205.5 101.9L204.2 104.5L202.8 107.3L201.4 110.1L200.0 112.9L198.6 115.9L197.2 118.9L195.7 121.9L194.2 124.9L192.7 128.0L191.1 131.1L189.5 134.2L187.8 137.3L186.1 140.5L184.4 143.8L182.6 147.1L180.7 150.4L178.9 153.8L177.0 157.1L175.1 160.4L173.2 163.7L171.4 167.0L169.5 170.2L167.7 173.3L165.9 176.3L164.1 179.3L162.2 182.2L160.4 185.0L158.5 187.8L156.7 190.7L154.9 193.5L153.1 196.3L151.3 199.1L149.5 202.0L147.7 205.0L146.0 208.0L144.3 211.1L142.5 214.3L140.7 217.5L138.9 220.8L137.2 224.1L135.4 227.4L133.7 230.7L132.1 234.1L130.6 237.4L129.1 240.7L127.7 243.9L126.5 247.1L125.4 250.3L124.4 253.5L123.4 256.6L122.6 259.8L121.8 263.0L121.2 266.1L120.5 269.2L119.9 272.3L119.4 275.3L118.9 278.3L118.4 281.2L117.9 284.0L117.5 286.9L117.1 289.8L116.7 292.8L116.4 295.7L116.2 298.7L116.0 301.5L115.8 304.2L115.6 306.8L115.5 309.1L115.4 311.2L115.2 313.0L115.1 314.4A192.8 192.8 0 0 0 499.9 314.4L499.9 314.4L499.8 313.0L499.6 311.2L499.5 309.1L499.4 306.8L499.2 304.2L499.0 301.5L498.8 298.7L498.6 295.7L498.3 292.8L497.9 289.8L497.5 286.9L497.1 284.0L496.6 281.2L496.1 278.3L495.6 275.3L495.1 272.3L494.5 269.2L493.8 266.1L493.2 263.0L492.4 259.8L491.6 256.6L490.6 253.5L489.6 250.3L488.5 247.1L487.3 243.9L485.9 240.7L484.4 237.4L482.9 234.1L481.3 230.7L479.6 227.4L477.8 224.1L476.1 220.8L474.3 217.5L472.5 214.3L470.7 211.1L469.0 208.0L467.3 205.0L465.5 202.0L463.7 199.1L461.9 196.3L460.1 193.5L458.3 190.7L456.5 187.8L454.6 185.0L452.8 182.2L450.9 179.3L449.1 176.3L447.3 173.3L445.5 170.2L443.6 167.0L441.8 163.7L439.9 160.4L438.0 157.1L436.1 153.8L434.3 150.4L432.4 147.1L430.6 143.8L428.9 140.5L427.2 137.3L425.5 134.2L423.9 131.1L422.3 128.0L420.8 124.9L419.3 121.9L417.8 118.9L416.4 115.9L415.0 112.9L413.6 110.1L412.2 107.3L410.8 104.5L409.5 101.9L408.2 99.4L406.9 96.9L405.5 94.5L404.1 92.0L402.7 89.7L401.4 87.3L400.1 85.1L398.8 83.0L397.6 81.1L396.6 79.3L395.6 77.7L394.8 76.3L394.1 75.2L400.2 71V56Q400.2 52 396 52L376.2 52V45.5Q376.2 41.5 372 41.5L243 41.5Q238.8 41.5 238.8 45.5V52L219 52Q214.8 52 214.8 56V71Z"/></clipPath><path d="M220.9 75.2L220.2 76.3L219.4 77.7L218.4 79.3L217.4 81.1L216.2 83.0L214.9 85.1L213.6 87.3L212.3 89.7L210.9 92.0L209.5 94.5L208.1 96.9L206.8 99.4L205.5 101.9L204.2 104.5L202.8 107.3L201.4 110.1L200.0 112.9L198.6 115.9L197.2 118.9L195.7 121.9L194.2 124.9L192.7 128.0L191.1 131.1L189.5 134.2L187.8 137.3L186.1 140.5L184.4 143.8L182.6 147.1L180.7 150.4L178.9 153.8L177.0 157.1L175.1 160.4L173.2 163.7L171.4 167.0L169.5 170.2L167.7 173.3L165.9 176.3L164.1 179.3L162.2 182.2L160.4 185.0L158.5 187.8L156.7 190.7L154.9 193.5L153.1 196.3L151.3 199.1L149.5 202.0L147.7 205.0L146.0 208.0L144.3 211.1L142.5 214.3L140.7 217.5L138.9 220.8L137.2 224.1L135.4 227.4L133.7 230.7L132.1 234.1L130.6 237.4L129.1 240.7L127.7 243.9L126.5 247.1L125.4 250.3L124.4 253.5L123.4 256.6L122.6 259.8L121.8 263.0L121.2 266.1L120.5 269.2L119.9 272.3L119.4 275.3L118.9 278.3L118.4 281.2L117.9 284.0L117.5 286.9L117.1 289.8L116.7 292.8L116.4 295.7L116.2 298.7L116.0 301.5L115.8 304.2L115.6 306.8L115.5 309.1L115.4 311.2L115.2 313.0L115.1 314.4A192.8 192.8 0 0 0 499.9 314.4L499.9 314.4L499.8 313.0L499.6 311.2L499.5 309.1L499.4 306.8L499.2 304.2L499.0 301.5L498.8 298.7L498.6 295.7L498.3 292.8L497.9 289.8L497.5 286.9L497.1 284.0L496.6 281.2L496.1 278.3L495.6 275.3L495.1 272.3L494.5 269.2L493.8 266.1L493.2 263.0L492.4 259.8L491.6 256.6L490.6 253.5L489.6 250.3L488.5 247.1L487.3 243.9L485.9 240.7L484.4 237.4L482.9 234.1L481.3 230.7L479.6 227.4L477.8 224.1L476.1 220.8L474.3 217.5L472.5 214.3L470.7 211.1L469.0 208.0L467.3 205.0L465.5 202.0L463.7 199.1L461.9 196.3L460.1 193.5L458.3 190.7L456.5 187.8L454.6 185.0L452.8 182.2L450.9 179.3L449.1 176.3L447.3 173.3L445.5 170.2L443.6 167.0L441.8 163.7L439.9 160.4L438.0 157.1L436.1 153.8L434.3 150.4L432.4 147.1L430.6 143.8L428.9 140.5L427.2 137.3L425.5 134.2L423.9 131.1L422.3 128.0L420.8 124.9L419.3 121.9L417.8 118.9L416.4 115.9L415.0 112.9L413.6 110.1L412.2 107.3L410.8 104.5L409.5 101.9L408.2 99.4L406.9 96.9L405.5 94.5L404.1 92.0L402.7 89.7L401.4 87.3L400.1 85.1L398.8 83.0L397.6 81.1L396.6 79.3L395.6 77.7L394.8 76.3L394.1 75.2L400.2 71V56Q400.2 52 396 52L376.2 52V45.5Q376.2 41.5 372 41.5L243 41.5Q238.8 41.5 238.8 45.5V52L219 52Q214.8 52 214.8 56V71ZM146.8 301.5A160.7 160.7 0 1 0 468.2 301.5A160.7 160.7 0 1 0 146.8 301.5ZM246 77L368.5 77L392 136.3A246 246 0 0 0 222.8 136.3Z" fill="#7cf658" fill-rule="evenodd"/><g clip-path="url(#body3)"><path d="M185.1 170.9A179 179 0 1 0 429.9 170.9" stroke="#3c9030" stroke-width="20.5" fill="none"/><path d="M177.5 162.9A190 190 0 1 0 437.5 162.9" stroke="#1c5c14" stroke-width="1.6" stroke-dasharray="1.5 1.5" fill="none"/><path d="M191.9 178.2A169 169 0 1 0 423.1 178.2M188.5 174.6A174 174 0 1 0 426.5 174.6M185.1 170.9A179 179 0 1 0 429.9 170.9M181.7 167.3A184 184 0 1 0 433.3 167.3M178.2 163.6A189 189 0 1 0 436.8 163.6M145.8 301.5L115.7 301.5M148.9 333.0L119.4 338.9M158.1 363.4L130.3 374.9M173.1 391.3L148.0 408.1M193.2 415.8L171.9 437.1M217.7 435.9L200.9 461.0M245.6 450.9L234.1 478.7M276.0 460.1L270.1 489.6M307.5 463.2L307.5 493.3M339.0 460.1L344.9 489.6M369.4 450.9L380.9 478.7M397.3 435.9L414.1 461.0M421.8 415.8L443.1 437.1M441.9 391.3L467.0 408.1M456.9 363.4L484.7 374.9M466.1 333.0L495.6 338.9M469.2 301.5L499.3 301.5" stroke="#a4ff88" stroke-width=".8" fill="none" opacity=".85"/></g><path d="M225.5 146.3A242 242 0 0 1 389.5 146.3M227.5 148.8A238.5 238.5 0 0 1 387.5 148.8M230.5 151.3A235 235 0 0 1 384.5 151.3" stroke="#2f7d22" stroke-width="1.2" fill="none" stroke-dasharray="5 1.5"/><path d="M220.9 75.2L220.2 76.3L219.4 77.7L218.4 79.3L217.4 81.1L216.2 83.0L214.9 85.1L213.6 87.3L212.3 89.7L210.9 92.0L209.5 94.5L208.1 96.9L206.8 99.4L205.5 101.9L204.2 104.5L202.8 107.3L201.4 110.1L200.0 112.9L198.6 115.9L197.2 118.9L195.7 121.9L194.2 124.9L192.7 128.0L191.1 131.1L189.5 134.2L187.8 137.3L186.1 140.5L184.4 143.8L182.6 147.1L180.7 150.4L178.9 153.8L177.0 157.1L175.1 160.4L173.2 163.7L171.4 167.0L169.5 170.2L167.7 173.3L165.9 176.3L164.1 179.3L162.2 182.2L160.4 185.0L158.5 187.8L156.7 190.7L154.9 193.5L153.1 196.3L151.3 199.1L149.5 202.0L147.7 205.0L146.0 208.0L144.3 211.1L142.5 214.3L140.7 217.5L138.9 220.8L137.2 224.1L135.4 227.4L133.7 230.7L132.1 234.1L130.6 237.4L129.1 240.7L127.7 243.9L126.5 247.1L125.4 250.3L124.4 253.5L123.4 256.6L122.6 259.8L121.8 263.0L121.2 266.1L120.5 269.2L119.9 272.3L119.4 275.3L118.9 278.3L118.4 281.2L117.9 284.0L117.5 286.9L117.1 289.8L116.7 292.8L116.4 295.7L116.2 298.7L116.0 301.5L115.8 304.2L115.6 306.8L115.5 309.1L115.4 311.2L115.2 313.0L115.1 314.4" stroke="#a9c6f3" stroke-width="17" fill="none" clip-path="url(#body3)"/><path d="M228.1 80.8L217.8 79.4L223.7 88.0ZM222.7 89.6L212.4 88.5L218.4 96.9ZM217.6 98.4L207.2 97.6L213.6 105.8ZM212.8 107.4L202.4 107.0L209.0 115.0ZM208.2 116.8L197.8 116.4L204.5 124.3ZM203.6 126.3L193.2 125.9L199.8 133.8ZM198.8 135.9L188.4 135.2L194.8 143.3ZM193.8 145.3L183.4 144.4L189.8 152.7ZM188.7 154.6L178.4 153.6L184.6 161.9ZM183.6 163.8L173.2 162.8L179.4 171.1ZM178.3 173.0L168.0 171.8L174.0 180.3ZM172.8 182.3L162.5 180.8L168.3 189.4ZM167.1 191.3L156.8 189.6L162.5 198.3ZM161.4 199.9L151.1 198.4L156.9 207.0ZM156.1 208.5L145.7 207.5L151.9 215.8ZM151.0 217.6L140.6 216.6L146.9 224.9ZM146.0 226.6L135.7 225.9L142.1 234.0ZM141.4 235.6L131.0 235.3L137.8 243.2ZM137.2 244.5L126.8 245.0L134.1 252.3ZM133.7 253.6L123.4 255.0L131.4 261.7ZM131.0 263.1L120.8 265.2L129.2 271.3ZM128.9 273.0L118.8 275.5L127.5 281.3ZM127.1 283.2L117.1 285.9L125.8 291.5ZM125.7 293.0L115.9 296.3L125.0 301.3ZM124.9 303.2L115.1 306.8L124.4 311.6Z" fill="#7cf658"/><path d="M241.0 82.0l-9.0 -5.0M241.0 86.0l-9.0 -5.0M233.3 93.7l-9.0 -5.0M233.3 97.7l-9.0 -5.0M225.7 105.3l-9.0 -5.0M225.7 109.3l-9.0 -5.0M218.0 117.0l-9.0 -5.0M218.0 121.0l-9.0 -5.0M210.3 128.7l-9.0 -5.0M210.3 132.7l-9.0 -5.0M202.7 140.3l-9.0 -5.0M202.7 144.3l-9.0 -5.0M195.0 152.0l-9.0 -5.0M195.0 156.0l-9.0 -5.0M187.3 163.7l-9.0 -5.0M187.3 167.7l-9.0 -5.0M179.7 175.3l-9.0 -5.0M179.7 179.3l-9.0 -5.0M172.0 187.0l-9.0 -5.0M172.0 191.0l-9.0 -5.0M164.3 198.7l-9.0 -5.0M164.3 202.7l-9.0 -5.0M156.7 210.3l-9.0 -5.0M156.7 214.3l-9.0 -5.0" stroke="#2f7d22" stroke-width="1.6" fill="none"/><rect x="207.0" y="140.0" width="14" height="12" transform="rotate(-28 214.0 146)" fill="#2f7d22" opacity=".85"/><rect x="182.0" y="189.0" width="16" height="14" transform="rotate(-35 190.0 196)" fill="#2f7d22" opacity=".85"/><rect x="223.0" y="107.0" width="10" height="10" transform="rotate(-22 228.0 112)" fill="#2f7d22" opacity=".85"/><path d="M394.1 75.2L394.8 76.3L395.6 77.7L396.6 79.3L397.6 81.1L398.8 83.0L400.1 85.1L401.4 87.3L402.7 89.7L404.1 92.0L405.5 94.5L406.9 96.9L408.2 99.4L409.5 101.9L410.8 104.5L412.2 107.3L413.6 110.1L415.0 112.9L416.4 115.9L417.8 118.9L419.3 121.9L420.8 124.9L422.3 128.0L423.9 131.1L425.5 134.2L427.2 137.3L428.9 140.5L430.6 143.8L432.4 147.1L434.3 150.4L436.1 153.8L438.0 157.1L439.9 160.4L441.8 163.7L443.6 167.0L445.5 170.2L447.3 173.3L449.1 176.3L450.9 179.3L452.8 182.2L454.6 185.0L456.5 187.8L458.3 190.7L460.1 193.5L461.9 196.3L463.7 199.1L465.5 202.0L467.3 205.0L469.0 208.0L470.7 211.1L472.5 214.3L474.3 217.5L476.1 220.8L477.8 224.1L479.6 227.4L481.3 230.7L482.9 234.1L484.4 237.4L485.9 240.7L487.3 243.9L488.5 247.1L489.6 250.3L490.6 253.5L491.6 256.6L492.4 259.8L493.2 263.0L493.8 266.1L494.5 269.2L495.1 272.3L495.6 275.3L496.1 278.3L496.6 281.2L497.1 284.0L497.5 286.9L497.9 289.8L498.3 292.8L498.6 295.7L498.8 298.7L499.0 301.5L499.2 304.2L499.4 306.8L499.5 309.1L499.6 311.2L499.8 313.0L499.9 314.4" stroke="#a9c6f3" stroke-width="17" fill="none" clip-path="url(#body3)"/><path d="M386.9 80.8L397.2 79.4L391.3 88.0ZM392.3 89.6L402.6 88.5L396.6 96.9ZM397.4 98.4L407.8 97.6L401.4 105.8ZM402.2 107.4L412.6 107.0L406.0 115.0ZM406.8 116.8L417.2 116.4L410.5 124.3ZM411.4 126.3L421.8 125.9L415.2 133.8ZM416.2 135.9L426.6 135.2L420.2 143.3ZM421.2 145.3L431.6 144.4L425.2 152.7ZM426.3 154.6L436.6 153.6L430.4 161.9ZM431.4 163.8L441.8 162.8L435.6 171.1ZM436.7 173.0L447.0 171.8L441.0 180.3ZM442.2 182.3L452.5 180.8L446.7 189.4ZM447.9 191.3L458.2 189.6L452.5 198.3ZM453.6 199.9L463.9 198.4L458.1 207.0ZM458.9 208.5L469.3 207.5L463.1 215.8ZM464.0 217.6L474.4 216.6L468.1 224.9ZM469.0 226.6L479.3 225.9L472.9 234.0ZM473.6 235.6L484.0 235.3L477.2 243.2ZM477.8 244.5L488.2 245.0L480.9 252.3ZM481.3 253.6L491.6 255.0L483.6 261.7ZM484.0 263.1L494.2 265.2L485.8 271.3ZM486.1 273.0L496.2 275.5L487.5 281.3ZM487.9 283.2L497.9 285.9L489.2 291.5ZM489.3 293.0L499.1 296.3L490.0 301.3ZM490.1 303.2L499.9 306.8L490.6 311.6Z" fill="#7cf658"/><path d="M374.0 82.0l9.0 -5.0M374.0 86.0l9.0 -5.0M381.7 93.7l9.0 -5.0M381.7 97.7l9.0 -5.0M389.3 105.3l9.0 -5.0M389.3 109.3l9.0 -5.0M397.0 117.0l9.0 -5.0M397.0 121.0l9.0 -5.0M404.7 128.7l9.0 -5.0M404.7 132.7l9.0 -5.0M412.3 140.3l9.0 -5.0M412.3 144.3l9.0 -5.0M420.0 152.0l9.0 -5.0M420.0 156.0l9.0 -5.0M427.7 163.7l9.0 -5.0M427.7 167.7l9.0 -5.0M435.3 175.3l9.0 -5.0M435.3 179.3l9.0 -5.0M443.0 187.0l9.0 -5.0M443.0 191.0l9.0 -5.0M450.7 198.7l9.0 -5.0M450.7 202.7l9.0 -5.0M458.3 210.3l9.0 -5.0M458.3 214.3l9.0 -5.0" stroke="#2f7d22" stroke-width="1.6" fill="none"/><rect x="394.0" y="140.0" width="14" height="12" transform="rotate(28 401.0 146)" fill="#2f7d22" opacity=".85"/><rect x="417.0" y="189.0" width="16" height="14" transform="rotate(35 425.0 196)" fill="#2f7d22" opacity=".85"/><rect x="382.0" y="107.0" width="10" height="10" transform="rotate(22 387.0 112)" fill="#2f7d22" opacity=".85"/><rect x="217" y="63.6" width="181" height="11.2" fill="url(#gal)"/><path d="M217 63.6H398M217 74.8H398" stroke="#7cf658" stroke-width="1.6"/><path d="M225 63.6V74.8M248 63.6V74.8M271 63.6V74.8M294 63.6V74.8M317 63.6V74.8M340 63.6V74.8M363 63.6V74.8M386 63.6V74.8" stroke="#9cff80" stroke-width=".8"/><rect x="223.0" y="54" width="6" height="5.5" fill="#a9c6f3"/><rect x="234.8" y="54" width="6" height="5.5" fill="#a9c6f3"/><rect x="246.6" y="54" width="6" height="5.5" fill="#a9c6f3"/><rect x="258.4" y="54" width="6" height="5.5" fill="#a9c6f3"/><rect x="270.2" y="54" width="6" height="5.5" fill="#a9c6f3"/><rect x="282.0" y="54" width="6" height="5.5" fill="#a9c6f3"/><rect x="293.8" y="54" width="6" height="5.5" fill="#a9c6f3"/><rect x="305.6" y="54" width="6" height="5.5" fill="#a9c6f3"/><rect x="317.4" y="54" width="6" height="5.5" fill="#a9c6f3"/><rect x="329.2" y="54" width="6" height="5.5" fill="#a9c6f3"/><rect x="341.0" y="54" width="6" height="5.5" fill="#a9c6f3"/><rect x="352.8" y="54" width="6" height="5.5" fill="#a9c6f3"/><rect x="364.6" y="54" width="6" height="5.5" fill="#a9c6f3"/><rect x="376.4" y="54" width="6" height="5.5" fill="#a9c6f3"/><rect x="388.2" y="54" width="6" height="5.5" fill="#a9c6f3"/><rect x="246.0" y="44" width="6" height="5" fill="#a9c6f3"/><rect x="257.7" y="44" width="6" height="5" fill="#a9c6f3"/><rect x="269.4" y="44" width="6" height="5" fill="#a9c6f3"/><rect x="281.1" y="44" width="6" height="5" fill="#a9c6f3"/><rect x="292.8" y="44" width="6" height="5" fill="#a9c6f3"/><rect x="304.5" y="44" width="6" height="5" fill="#a9c6f3"/><rect x="316.2" y="44" width="6" height="5" fill="#a9c6f3"/><rect x="327.9" y="44" width="6" height="5" fill="#a9c6f3"/><rect x="339.6" y="44" width="6" height="5" fill="#a9c6f3"/><rect x="351.3" y="44" width="6" height="5" fill="#a9c6f3"/><rect x="363.0" y="44" width="6" height="5" fill="#a9c6f3"/><path d="M221.5 63L226.0 56L230.5 63ZM233.3 63L237.8 56L242.3 63ZM245.1 63L249.6 56L254.1 63ZM256.9 63L261.4 56L265.9 63ZM268.7 63L273.2 56L277.7 63ZM280.5 63L285.0 56L289.5 63ZM292.3 63L296.8 56L301.3 63ZM304.1 63L308.6 56L313.1 63ZM315.9 63L320.4 56L324.9 63ZM327.7 63L332.2 56L336.7 63ZM339.5 63L344.0 56L348.5 63ZM351.3 63L355.8 56L360.3 63ZM363.1 63L367.6 56L372.1 63ZM374.9 63L379.4 56L383.9 63ZM386.7 63L391.2 56L395.7 63Z" fill="#2f7d22"/><path d="M301 75.5L307.5 81.5L314 75.5Z" fill="#a9c6f3"/></g><path d="M37.5 449V478" stroke="#b0a860" stroke-width="1.1"/><path d="M37 478H64" stroke="#a01818" stroke-width="1.2"/><text x="40" y="450" font-family="Liberation Sans,sans-serif" font-size="10" fill="#b0a860">z</text><text x="68" y="481" font-family="Liberation Sans,sans-serif" font-weight="bold" font-size="11" fill="#c02020">x</text><g transform="translate(606.8 41.1)" fill="none" stroke="#e0b050" stroke-width="1"><circle cx="0" cy="0" r="17.6"/><circle cx="0" cy="0" r="15.3"/><path d="M0 -18V-13M-18 0H-14.5M14.5 0H18M0 14.5V19" /><path d="M-4.5 -29.5H4.5L7 -26.5L0 -19.5L-7 -26.5ZM-7 -26.5H7M-2 -29.5V-26.5M2 -29.5V-26.5" stroke="#4a6ad0"/></g></svg><div class="vpt" style="width:113px;">Through Finger</div></div>
<div class="vp" style="left:701px;top:634px;width:647px;height:514px"><svg width="647" height="514" viewBox="0 0 647 514"><defs>
<linearGradient id="gal4" x1="0" y1="0" x2="1" y2="0"><stop offset="0" stop-color="#9cff7c"/><stop offset=".06" stop-color="#5cc040"/><stop offset=".3" stop-color="#4aa838"/><stop offset=".6" stop-color="#2a6a20"/><stop offset=".88" stop-color="#0c2408"/><stop offset=".95" stop-color="#9cff80"/><stop offset="1" stop-color="#58c040"/></linearGradient>
<linearGradient id="dome4" x1="0" y1="0" x2="1" y2="0"><stop offset="0" stop-color="#9ab0dc"/><stop offset=".3" stop-color="#a9c6f3"/><stop offset=".55" stop-color="#6a7a9c"/><stop offset=".8" stop-color="#4a5674"/><stop offset="1" stop-color="#9ab4e4"/></linearGradient>
<pattern id="stip4" width="23" height="19" patternUnits="userSpaceOnUse" patternTransform="rotate(17)"><path d="M1 1h1.4v1.4h-1.4zM8 4h1.2v1.2h-1.2zM15 2h1.4v1.4h-1.4zM20 7h1.2v1.2h-1.2zM4 10h1.4v1.4h-1.4zM11 12h1.4v1.4h-1.4zM18 14h1.2v1.2h-1.2zM7 16h1.3v1.3h-1.3zM13 7h1.2v1.2h-1.2zM2 15h1v1h-1z" fill="#0a1020"/></pattern>
</defs><path d="M-33.5 0V514M-15.5 0V514M3.5 0V514M22.5 0V514M59.5 0V514M78.5 0V514M96.5 0V514M115.5 0V514M152.5 0V514M171.5 0V514M189.5 0V514M208.5 0V514M245.5 0V514M264.5 0V514M282.5 0V514M301.5 0V514M338.5 0V514M357.5 0V514M376.5 0V514M394.5 0V514M431.5 0V514M450.5 0V514M469.5 0V514M487.5 0V514M525.5 0V514M543.5 0V514M562.5 0V514M581.5 0V514M618.5 0V514M636.5 0V514M655.5 0V514M0 -33.5H647M0 -15.5H647M0 3.5H647M0 40.5H647M0 59.5H647M0 78.5H647M0 96.5H647M0 133.5H647M0 152.5H647M0 171.5H647M0 189.5H647M0 227.5H647M0 245.5H647M0 264.5H647M0 282.5H647M0 320.5H647M0 338.5H647M0 357.5H647M0 376.5H647M0 413.5H647M0 432.5H647M0 450.5H647M0 469.5H647M0 506.5H647M0 525.5H647" stroke="#2f2f2f" stroke-width="1" fill="none" shape-rendering="crispEdges"/><path d="M40.5 0V514M133.5 0V514M227.5 0V514M320.5 0V514M413.5 0V514M506.5 0V514M599.5 0V514M0 22.5H647M0 115.5H647M0 208.5H647M0 301.5H647M0 394.5H647M0 487.5H647" stroke="#6e6e6e" stroke-width="1" fill="none" shape-rendering="crispEdges"/><path d="M320.2 0V120" stroke="#1c50b0" stroke-width="1.6"/><path d="M338 301.6H647" stroke="#8c1616" stroke-width="1.6"/><path d="M270.8 42L283 29Q289 20.5 296 20.2L346 20.2Q353 20.5 359 29L369.8 42Z" fill="url(#dome4)"/><path d="M275.0 42L295.0 20.5M284.0 42L300.0 20.5M293.0 42L305.0 20.5M302.0 42L310.0 20.5M311.0 42L315.0 20.5M320.0 42L320.0 20.5M329.0 42L325.0 20.5M338.0 42L330.0 20.5M347.0 42L335.0 20.5M356.0 42L340.0 20.5M365.0 42L345.0 20.5M277 35H363M285 27.5H355M274 40L312 20.5M366 40L328 20.5M292 42L342 20.5M348 42L298 20.5" stroke="#e4ecfc" stroke-width=".8" fill="none"/><path d="M330 22L352 22L363 40L338 40Z" fill="#39445e" opacity=".7"/><path d="M297 26L318 23L312 36L288 38Z" fill="#5a6884" opacity=".6"/><path d="M281.9 73L303 73C305 100 318.2 112 320.2 119.6C322.2 112 333 100 335.4 73L358.9 73C354 100 345 118 343 132C340 150 337.6 165 337.6 190V481Q337.6 495 323.6 495H317.8Q303.8 495 303.8 481V190C303.8 165 300 150 298 132C296 118 287 100 281.9 73Z" fill="#7cf658"/><clipPath id="c4"><path d="M281.9 73L303 73C305 100 318.2 112 320.2 119.6C322.2 112 333 100 335.4 73L358.9 73C354 100 345 118 343 132C340 150 337.6 165 337.6 190V481Q337.6 495 323.6 495H317.8Q303.8 495 303.8 481V190C303.8 165 300 150 298 132C296 118 287 100 281.9 73Z"/></clipPath><g clip-path="url(#c4)"><path d="M287 73L301 73C304 102 312 118 320.2 126C328 118 336 102 338 73L354 73C350 100 342 120 340 134L326.7 150V321H313.7V150L301 134C298 120 292 100 287 73Z" fill="#a9c6f3"/><ellipse cx="320.2" cy="135.4" rx="17" ry="10.5" fill="#a9c6f3"/><ellipse cx="320.2" cy="160.8" rx="17" ry="10.5" fill="#a9c6f3"/><ellipse cx="320.2" cy="186.8" rx="17" ry="10.5" fill="#a9c6f3"/><ellipse cx="320.2" cy="214.0" rx="17" ry="10.5" fill="#a9c6f3"/><ellipse cx="320.2" cy="242.6" rx="17" ry="10.5" fill="#a9c6f3"/><ellipse cx="320.2" cy="272.6" rx="17" ry="10.5" fill="#a9c6f3"/><ellipse cx="320.2" cy="303.9" rx="17" ry="10.5" fill="#a9c6f3"/><rect x="303.8" y="70" width="33.80000000000001" height="250" fill="url(#stip4)"/><path d="M306.8 145.1h4M306.8 151.1h4M330.6 145.1h4M330.6 151.1h4M306.8 170.8h4M306.8 176.8h4M330.6 170.8h4M330.6 176.8h4M306.8 197.4h4M306.8 203.4h4M330.6 197.4h4M330.6 203.4h4M306.8 225.3h4M306.8 231.3h4M330.6 225.3h4M330.6 231.3h4M306.8 254.6h4M306.8 260.6h4M330.6 254.6h4M330.6 260.6h4M306.8 285.2h4M306.8 291.2h4M330.6 285.2h4M330.6 291.2h4" stroke="#2f7d22" stroke-width="1.3"/><rect x="310.8" y="321" width="7" height="174" fill="#1c5c14"/><rect x="323.6" y="321" width="7" height="174" fill="#1c5c14"/><rect x="306.8" y="321" width="3" height="172" fill="#2f8a22"/><rect x="331.6" y="321" width="3" height="172" fill="#2f8a22"/><path d="M303.8 352H337.6M303.8 376H337.6M303.8 398H337.6M303.8 420H337.6M303.8 440H337.6M303.8 458H337.6M303.8 472H337.6M303.8 482H337.6M303.8 489H337.6" stroke="#90ff70" stroke-width=".9"/><path d="M310.3 321V495M313.8 321V495M318.3 321V495M323.1 321V495M327.6 321V495M331.1 321V495" stroke="#90ff70" stroke-width=".8"/></g><circle cx="320.9" cy="135.4" r="7.6" fill="#a9c6f3"/><circle cx="320.9" cy="135.4" r="6.4" fill="#5f6b86"/><path d="M314.5 135.4H327.3M320.9 129.0V141.8" stroke="#c8d8f8" stroke-width="1"/><circle cx="320.9" cy="160.8" r="7.6" fill="#a9c6f3"/><circle cx="320.9" cy="160.8" r="6.4" fill="#5f6b86"/><path d="M314.5 160.8H327.3M320.9 154.4V167.2" stroke="#c8d8f8" stroke-width="1"/><circle cx="320.9" cy="186.8" r="7.6" fill="#a9c6f3"/><circle cx="320.9" cy="186.8" r="6.4" fill="#5f6b86"/><path d="M314.5 186.8H327.3M320.9 180.4V193.2" stroke="#c8d8f8" stroke-width="1"/><circle cx="320.9" cy="214.0" r="7.6" fill="#a9c6f3"/><circle cx="320.9" cy="214.0" r="6.4" fill="#5f6b86"/><path d="M314.5 214.0H327.3M320.9 207.6V220.4" stroke="#c8d8f8" stroke-width="1"/><circle cx="320.9" cy="242.6" r="7.6" fill="#a9c6f3"/><circle cx="320.9" cy="242.6" r="6.4" fill="#5f6b86"/><path d="M314.5 242.6H327.3M320.9 236.2V249.0" stroke="#c8d8f8" stroke-width="1"/><circle cx="320.9" cy="272.6" r="7.6" fill="#a9c6f3"/><circle cx="320.9" cy="272.6" r="6.4" fill="#5f6b86"/><path d="M314.5 272.6H327.3M320.9 266.2V279.0" stroke="#c8d8f8" stroke-width="1"/><circle cx="320.9" cy="303.9" r="7.6" fill="#a9c6f3"/><circle cx="320.9" cy="303.9" r="6.4" fill="#5f6b86"/><path d="M314.5 303.9H327.3M320.9 297.5V310.3" stroke="#c8d8f8" stroke-width="1"/><circle cx="293.5" cy="93.8" r="4" fill="#7cf658"/><circle cx="304.0" cy="93.8" r="3.4" fill="#7cf658"/><circle cx="299.0" cy="110.8" r="4" fill="#7cf658"/><circle cx="309.5" cy="110.8" r="3.4" fill="#7cf658"/><circle cx="346.6" cy="93.6" r="4" fill="#7cf658"/><circle cx="336.1" cy="93.6" r="3.4" fill="#7cf658"/><circle cx="341.3" cy="110.3" r="4" fill="#7cf658"/><circle cx="330.8" cy="110.3" r="3.4" fill="#7cf658"/><circle cx="295.8" cy="84.9" r="6.1" fill="#a9c6f3"/><circle cx="295.8" cy="84.9" r="4.3" fill="#5f6b86"/><path d="M291.5 84.9H300.1M295.8 80.6V89.2" stroke="#c8d8f8" stroke-width="1"/><circle cx="301.1" cy="102.8" r="6.1" fill="#a9c6f3"/><circle cx="301.1" cy="102.8" r="4.3" fill="#5f6b86"/><path d="M296.8 102.8H305.4M301.1 98.5V107.1" stroke="#c8d8f8" stroke-width="1"/><circle cx="306.8" cy="118.8" r="6.1" fill="#a9c6f3"/><circle cx="306.8" cy="118.8" r="4.3" fill="#5f6b86"/><path d="M302.5 118.8H311.1M306.8 114.5V123.1" stroke="#c8d8f8" stroke-width="1"/><circle cx="344.7" cy="84.9" r="6.1" fill="#a9c6f3"/><circle cx="344.7" cy="84.9" r="4.3" fill="#5f6b86"/><path d="M340.4 84.9H349.0M344.7 80.6V89.2" stroke="#c8d8f8" stroke-width="1"/><circle cx="338.6" cy="102.3" r="6.1" fill="#a9c6f3"/><circle cx="338.6" cy="102.3" r="4.3" fill="#5f6b86"/><path d="M334.3 102.3H342.9M338.6 98.0V106.6" stroke="#c8d8f8" stroke-width="1"/><circle cx="334.0" cy="118.3" r="6.1" fill="#a9c6f3"/><circle cx="334.0" cy="118.3" r="4.3" fill="#5f6b86"/><path d="M329.7 118.3H338.3M334.0 114.0V122.6" stroke="#c8d8f8" stroke-width="1"/><path d="M311 73L320.2 84L329 73Z" fill="#7a88a8"/><rect x="250.8" y="40" width="139" height="14" rx="4" fill="#7cf658"/><rect x="227.6" y="49.5" width="185.6" height="26" rx="10" fill="#7cf658"/><rect x="229" y="62.5" width="183" height="12.5" rx="6" fill="url(#gal4)"/><path d="M234 62.5H407" stroke="#7cf658" stroke-width="1.4"/><path d="M246 63V75M268 63V75M290 63V75M312 63V75M334 63V75M356 63V75M378 63V75" stroke="#9cff80" stroke-width=".7"/><rect x="240.0" y="51.5" width="6" height="5" fill="#a9c6f3"/><rect x="251.8" y="51.5" width="6" height="5" fill="#a9c6f3"/><rect x="263.6" y="51.5" width="6" height="5" fill="#a9c6f3"/><rect x="275.4" y="51.5" width="6" height="5" fill="#a9c6f3"/><rect x="287.2" y="51.5" width="6" height="5" fill="#a9c6f3"/><rect x="299.0" y="51.5" width="6" height="5" fill="#a9c6f3"/><rect x="310.8" y="51.5" width="6" height="5" fill="#a9c6f3"/><rect x="322.6" y="51.5" width="6" height="5" fill="#a9c6f3"/><rect x="334.4" y="51.5" width="6" height="5" fill="#a9c6f3"/><rect x="346.2" y="51.5" width="6" height="5" fill="#a9c6f3"/><rect x="358.0" y="51.5" width="6" height="5" fill="#a9c6f3"/><rect x="369.8" y="51.5" width="6" height="5" fill="#a9c6f3"/><rect x="381.6" y="51.5" width="6" height="5" fill="#a9c6f3"/><rect x="393.4" y="51.5" width="6" height="5" fill="#a9c6f3"/><rect x="263.0" y="41.5" width="6" height="5" fill="#a9c6f3"/><rect x="274.8" y="41.5" width="6" height="5" fill="#a9c6f3"/><rect x="286.6" y="41.5" width="6" height="5" fill="#a9c6f3"/><rect x="298.4" y="41.5" width="6" height="5" fill="#a9c6f3"/><rect x="310.2" y="41.5" width="6" height="5" fill="#a9c6f3"/><rect x="322.0" y="41.5" width="6" height="5" fill="#a9c6f3"/><rect x="333.8" y="41.5" width="6" height="5" fill="#a9c6f3"/><rect x="345.6" y="41.5" width="6" height="5" fill="#a9c6f3"/><rect x="357.4" y="41.5" width="6" height="5" fill="#a9c6f3"/><rect x="369.2" y="41.5" width="6" height="5" fill="#a9c6f3"/><path d="M239.0 62L243.0 56L247.0 62ZM250.8 62L254.8 56L258.8 62ZM262.6 62L266.6 56L270.6 62ZM274.4 62L278.4 56L282.4 62ZM286.2 62L290.2 56L294.2 62ZM298.0 62L302.0 56L306.0 62ZM309.8 62L313.8 56L317.8 62ZM321.6 62L325.6 56L329.6 62ZM333.4 62L337.4 56L341.4 62ZM345.2 62L349.2 56L353.2 62ZM357.0 62L361.0 56L365.0 62ZM368.8 62L372.8 56L376.8 62ZM380.6 62L384.6 56L388.6 62ZM392.4 62L396.4 56L400.4 62Z" fill="#2f7d22"/><path d="M282 44C280 31 287 27 293 30L292 44Z" fill="#3f9a30" stroke="#7cf658" stroke-width="1.2" opacity=".9"/><path d="M358 44C360 31 353 27 347 30L348 44Z" fill="#2f7d22" stroke="#7cf658" stroke-width="1.2" opacity=".9"/><path d="M37.5 449V478" stroke="#b0a860" stroke-width="1.1"/><path d="M37 478H66" stroke="#2c58b8" stroke-width="1.3"/><text x="40" y="450" font-family="Liberation Sans,sans-serif" font-size="10" fill="#b0a860">z</text><text x="68" y="480" font-family="Liberation Sans,sans-serif" font-weight="bold" font-size="11" fill="#3a6ad0">y</text><g transform="translate(606.7 0)" fill="none" stroke="#e8b048" stroke-width="1"><path d="M-7 24L-3 20.5H3L7 24V27.5L4 40L3.5 57L0 60.8L-3.5 57L-4 40L-7 27.5Z"/><path d="M-7 27.5H7M-4 40H4M-3.5 57H3.5M-3.5 27.5L-2.5 40M3.5 27.5L2.5 40"/><path d="M-11.5 14.5L-8.5 11.5H6L8.5 14.5L3 20H-5.5ZM-11.5 14.5H8.5M-3 11.5V20M1.5 11.5V20" stroke="#4a6ad0"/></g></svg><div class="vpt" style="width:81px;">Side View</div></div>
<div id="panel"></div>
<div class="hdr" style="left:1357px;top:42px;height:24px"><div class="ico"></div><b style="left:31px;top:0px;letter-spacing:.35px">METAL WEIGHTS</b><b style="left:153px;top:0px;color:#e6e4dc;letter-spacing:.45px">7 Objects Checked</b><div class="abs" style="left:146px;top:3px;width:1px;height:20px;background:#888"></div></div>
<svg class="abs" style="left:1357px;top:42px" width="26" height="24" viewBox="0 0 26 24">
<ellipse cx="12.5" cy="17.5" rx="9.5" ry="5" fill="#1848e8"/><ellipse cx="12" cy="18" rx="6" ry="2.6" fill="#2a68ff"/>
<path d="M13 2L4 17M13 2L22 17M13 2L12 20M3 5C8 4 14 4 19 2" stroke="#9ab8ff" stroke-width="1.1" fill="none"/></svg>
<div class="cls" style="left:1639px;top:45px"><svg width="11" height="11" viewBox="0 0 11 11"><path d="M1.5 1.5L9.5 9.5M9.5 1.5L1.5 9.5" stroke="#c83030" stroke-width="1.2" fill="none"/></svg></div>
<div class="abs" style="left:1366px;top:70px;width:290px;height:177px;background:#f2f2f0;overflow:hidden"></div>
<div class="abs mwh" style="left:1366px;top:70px;width:96px;height:16px;text-align:left;padding-left:6px;">Metal</div>
<div class="abs mwh" style="left:1463px;top:70px;width:66px;height:16px;text-align:center;">Grams</div>
<div class="abs mwh" style="left:1530px;top:70px;width:66px;height:16px;text-align:center;">DWT</div>
<div class="abs mwh" style="left:1597px;top:70px;width:42px;height:16px;text-align:center;"></div>
<div class="abs" style="left:1366px;top:87px;width:273px;height:160px;background:#fff;overflow:hidden">
<div class="mwr" style="top:1px"><i style="left:0;width:96px;text-align:left;padding-left:4px">Gold 24k</i><i style="left:97px;width:66px">3.86</i><i style="left:164px;width:66px">2.48</i><i style="left:231px;width:42px"></i></div>
<div class="mwr" style="top:15px"><i style="left:0;width:96px;text-align:left;padding-left:4px">Gold 22k</i><i style="left:97px;width:66px">3.53</i><i style="left:164px;width:66px">2.27</i><i style="left:231px;width:42px"></i></div>
<div class="mwr" style="top:29px"><i style="left:0;width:96px;text-align:left;padding-left:4px">Gold 18k</i><i style="left:97px;width:66px">3.09</i><i style="left:164px;width:66px">1.99</i><i style="left:231px;width:42px"></i></div>
<div class="mwr" style="top:43px"><i style="left:0;width:96px;text-align:left;padding-left:4px">Gold 14k</i><i style="left:97px;width:66px">2.67</i><i style="left:164px;width:66px">1.72</i><i style="left:231px;width:42px"></i></div>
<div class="mwr" style="top:57px"><i style="left:0;width:96px;text-align:left;padding-left:4px">Gold 10k</i><i style="left:97px;width:66px">2.41</i><i style="left:164px;width:66px">1.55</i><i style="left:231px;width:42px"></i></div>
<div class="mwr" style="top:71px"><i style="left:0;width:96px;text-align:left;padding-left:4px">Platinum, Pure</i><i style="left:97px;width:66px">4.28</i><i style="left:164px;width:66px">2.75</i><i style="left:231px;width:42px"></i></div>
<div class="mwr" style="top:85px"><i style="left:0;width:96px;text-align:left;padding-left:4px">Platinum 15% Irid</i><i style="left:97px;width:66px">4.28</i><i style="left:164px;width:66px">2.75</i><i style="left:231px;width:42px"></i></div>
<div class="mwr" style="top:99px"><i style="left:0;width:96px;text-align:left;padding-left:4px">Platinum 10% Irid</i><i style="left:97px;width:66px">4.3</i><i style="left:164px;width:66px">2.76</i><i style="left:231px;width:42px"></i></div>
<div class="mwr" style="top:113px"><i style="left:0;width:96px;text-align:left;padding-left:4px">Platinum 5% Irid</i><i style="left:97px;width:66px">4.29</i><i style="left:164px;width:66px">2.76</i><i style="left:231px;width:42px"></i></div>
<div class="mwr" style="top:127px"><i style="left:0;width:96px;text-align:left;padding-left:4px">Silver, Pure</i><i style="left:97px;width:66px">2.09</i><i style="left:164px;width:66px">1.35</i><i style="left:231px;width:42px"></i></div>
<div class="mwr" style="top:141px"><i style="left:0;width:96px;text-align:left;padding-left:4px">Silver, Sterling (9...</i><i style="left:97px;width:66px">2.07</i><i style="left:164px;width:66px">1.33</i><i style="left:231px;width:42px"></i></div>
<div class="mwr" style="top:155px"><i style="left:0;width:96px;text-align:left;padding-left:4px">Silver, Coin (900)</i><i style="left:97px;width:66px">2.06</i><i style="left:164px;width:66px">1.32</i><i style="left:231px;width:42px"></i></div>
</div>
<svg class="abs" style="left:1639px;top:70px" width="17" height="177" viewBox="0 0 17 177">
<rect width="17" height="177" fill="#f4f4f2"/><path d="M5 12L8.5 8L12 12Z" fill="#404040"/><path d="M5 166L12 166L8.5 170Z" fill="#404040"/>
<rect x="1.5" y="19.5" width="13" height="29" rx="2" fill="#e8e8e8" stroke="#b0b0b0"/><path d="M5 30H12M5 33H12M5 36H12" stroke="#707070" stroke-width="1"/></svg>
<div class="abs" style="left:1357px;top:259px;width:301px;text-align:center;font-family:'Liberation Sans',sans-serif;font-weight:bold;font-size:12px;line-height:13px;color:#f0c020;letter-spacing:0px">Highlight the item you want to find the weight for<br>then press go.</div>
<div class="box dv" style="left:1446px;top:293px;width:105px;height:16px;line-height:14px;"><span>Calculate</span></div>
<div class="go" style="left:1552px;top:293px;width:16px;height:16px"></div>
<div class="hdr" style="left:1357px;top:342px;height:24px"><div class="ico" style="background:#5a8cc8"></div><b style="left:31px;top:0px;letter-spacing:0px">GEM REPORTER</b><div class="abs" style="left:146px;top:3px;width:1px;height:20px;background:#888"></div></div>
<svg class="abs" style="left:1357px;top:342px" width="26" height="24" viewBox="0 0 26 24">
<rect x="1" y="1" width="22" height="22" fill="#2a6ab8"/><rect x="3" y="2" width="18" height="20" fill="#4a9ae0"/>
<path d="M4 4H10M12 4H20M4 7H8M4 10H8M4 13H8M4 16H10M4 19H10M12 19H20M14 16H20" stroke="#e8f4ff" stroke-width="1.4"/>
<ellipse cx="13.5" cy="11" rx="6.5" ry="5" fill="#d8dce8"/><ellipse cx="12" cy="9.5" rx="3.5" ry="2.5" fill="#fff"/></svg>
<div class="cls" style="left:1639px;top:345px"><svg width="11" height="11" viewBox="0 0 11 11"><path d="M1.5 1.5L9.5 9.5M9.5 1.5L1.5 9.5" stroke="#c83030" stroke-width="1.2" fill="none"/></svg></div>
<div class="box dv" style="left:1363px;top:372px;width:146px;height:16px;line-height:14px;"><span>Total Gem Weight</span></div>
<div class="abs" style="left:1474px;top:373px;width:34px;height:14px;background:#000;color:#48c8e8;font-size:12px;line-height:14px;text-align:center;font-family:'Liberation Sans',sans-serif">.93</div>
<div class="box dv" style="left:1513px;top:372px;width:140px;height:16px;line-height:14px;"><span>Total Gem Count</span></div>
<div class="abs" style="left:1618px;top:373px;width:34px;height:14px;background:#000;color:#48c8e8;font-size:12px;line-height:14px;text-align:center;font-family:'Liberation Sans',sans-serif">71</div>
<svg class="abs" style="left:1390px;top:389px" width="236" height="16" viewBox="0 0 236 16"><path d="M5 8H231" stroke="#1a1a1a" stroke-width="1"/><path d="M5 9H231" stroke="#505050" stroke-width="1"/><circle cx="118" cy="8" r="5.5" fill="#484848" stroke="#8a8a8a" stroke-width="1.2"/><path d="M-3 1.5L3 1.5L0 -2Z" transform="translate(118 8)" fill="#f0f0f0"/></svg>
<div class="box dv" style="left:1401px;top:407px;width:49px;height:16px;line-height:14px;"><span>Update</span></div>
<div class="go" style="left:1453px;top:407px;width:16px;height:16px"></div>
<div class="box dv" style="left:1491px;top:407px;width:105px;height:16px;line-height:14px;"><span>Save Report</span></div>
<div class="go" style="left:1599px;top:407px;width:16px;height:16px"></div>
<div class="abs" style="left:1360px;top:426px;width:291px;height:298px;background:#555;border-top:1px solid #444;border-left:1px solid #444"></div>
<div class="abs" style="left:1368px;top:433px;width:36px;height:33px;border:1px solid #e8e8e8;background:#3c3c3c"></div>
<svg class="abs" style="left:1370px;top:436px" width="32" height="27" viewBox="0 0 32 27">
<defs><radialGradient id="gmi" cx=".4" cy=".35" r=".7"><stop offset="0" stop-color="#a8b0f0"/><stop offset=".6" stop-color="#6a74d0"/><stop offset="1" stop-color="#3a3c90"/></radialGradient></defs>
<ellipse cx="16" cy="13" rx="14" ry="10.5" fill="url(#gmi)"/><path d="M8 19C10 13 20 11 25 14C25 19 16 24 8 19Z" fill="#fff"/></svg>
<div class="gc dv" style="left:1403px;top:433px;width:120px;height:17px;line-height:16px">Diamond Round</div>
<div class="gc dv" style="left:1522px;top:433px;width:103px;height:17px;line-height:16px">Diamond</div>
<div class="gc dv" style="left:1403px;top:449px;width:120px;height:17px;line-height:16px">1.00 X 1.00</div>
<div class="gc dv" style="left:1522px;top:449px;width:37px;height:17px;line-height:16px">56</div>
<div class="gc dv" style="left:1558px;top:449px;width:50px;height:17px;line-height:16px">0.21tw</div>
<div class="go" style="left:1607px;top:449px;width:18px;height:17px"></div>
<div class="gc dv" style="left:1403px;top:465px;width:120px;height:17px;line-height:16px">5.20 X 5.20</div>
<div class="gc dv" style="left:1522px;top:465px;width:37px;height:17px;line-height:16px">1</div>
<div class="gc dv" style="left:1558px;top:465px;width:50px;height:17px;line-height:16px">0.51tw</div>
<div class="go" style="left:1607px;top:465px;width:18px;height:17px"></div>
<div class="gc dv" style="left:1403px;top:481px;width:120px;height:17px;line-height:16px">1.60 X 1.60</div>
<div class="gc dv" style="left:1522px;top:481px;width:37px;height:17px;line-height:16px">14</div>
<div class="gc dv" style="left:1558px;top:481px;width:50px;height:17px;line-height:16px">0.22tw</div>
<div class="go" style="left:1607px;top:481px;width:18px;height:17px"></div>
<div class="abs" style="left:1371px;top:730px;width:163px;height:20px;background:#c8c8c8;border:1px solid #fff;border-top-color:#888;border-left-color:#888;box-shadow:0 0 0 1px #ddd;font-size:11.5px;line-height:18px;color:#111;padding-left:3px;white-space:pre;letter-spacing:-.5px">Diamond      (3.52 spg)</div>
<svg class="abs" style="left:1515px;top:732px" width="17" height="16" viewBox="0 0 17 16"><rect x=".5" y=".5" width="16" height="15" fill="#f4f4f4" stroke="#a0a0a0"/><path d="M4.5 6L12.5 6L8.5 10.5Z" fill="#111"/></svg>
<div class="box dv" style="left:1543px;top:733px;width:76px;height:15px;line-height:13px;"><span>Set Material</span></div>
<div class="go" style="left:1622px;top:733px;width:16px;height:16px"></div>
<div class="hdr" style="left:1357px;top:765px;height:26px"><div class="ico" style="background:#70747c"></div><b style="left:31px;top:1px;font-size:11px">RING</b><b style="left:63px;top:14px;font-size:11px">RAIL</b></div>
<svg class="abs" style="left:1357px;top:765px" width="26" height="26" viewBox="0 0 26 26">
<circle cx="12.5" cy="13" r="8.5" fill="#20242c" stroke="#2858f0" stroke-width="3.2"/><circle cx="12.5" cy="13" r="9.2" fill="none" stroke="#88a8ff" stroke-width="1"/>
<path d="M9 15L15 11" stroke="#555" stroke-width="1.5"/></svg>
<div class="abs dv" style="left:1460px;top:770px;width:60px;height:16px;background:#333;border:1px solid #111;line-height:14px;padding-left:3px;font-size:11px">USA</div>
<div class="abs" style="left:1525px;top:768px;width:68px;height:20px;background:#c8c8c8;border:1px solid #f4f4f4;border-top-color:#888;border-left-color:#888;font-size:12px;line-height:18px;color:#111;padding-left:3px">7</div>
<svg class="abs" style="left:1575px;top:770px" width="17" height="16" viewBox="0 0 17 16"><rect x=".5" y=".5" width="16" height="15" fill="#f4f4f4" stroke="#a0a0a0"/><path d="M4.5 6L12.5 6L8.5 10.5Z" fill="#111"/></svg>
<div class="go" style="left:1598px;top:768px;width:18px;height:17px"></div>
<div class="cls" style="left:1639px;top:770px"><svg width="11" height="11" viewBox="0 0 11 11"><path d="M1.5 1.5L9.5 9.5M9.5 1.5L1.5 9.5" stroke="#c83030" stroke-width="1.2" fill="none"/></svg></div>
<svg class="abs" style="left:1390px;top:793px" width="236" height="16" viewBox="0 0 236 16"><path d="M5 8H231" stroke="#1a1a1a" stroke-width="1"/><path d="M5 9H231" stroke="#505050" stroke-width="1"/><circle cx="118" cy="8" r="5.5" fill="#484848" stroke="#8a8a8a" stroke-width="1.2"/><path d="M-3 -1.5L3 -1.5L0 2Z" transform="translate(118 8)" fill="#f0f0f0"/></svg>
<div style="position:absolute;font-family:'Liberation Sans',sans-serif;font-weight:bold;color:rgba(52,52,52,.44);white-space:nowrap;line-height:1;left:657px;top:527px;font-size:100px;letter-spacing:0px">WINSNAP</div><div style="position:absolute;font-family:'Liberation Sans',sans-serif;font-weight:bold;color:rgba(52,52,52,.44);white-space:nowrap;line-height:1;left:506px;top:642.5px;font-size:99px;letter-spacing:.9px">TRIAL VERSION</div>
</body></html>
